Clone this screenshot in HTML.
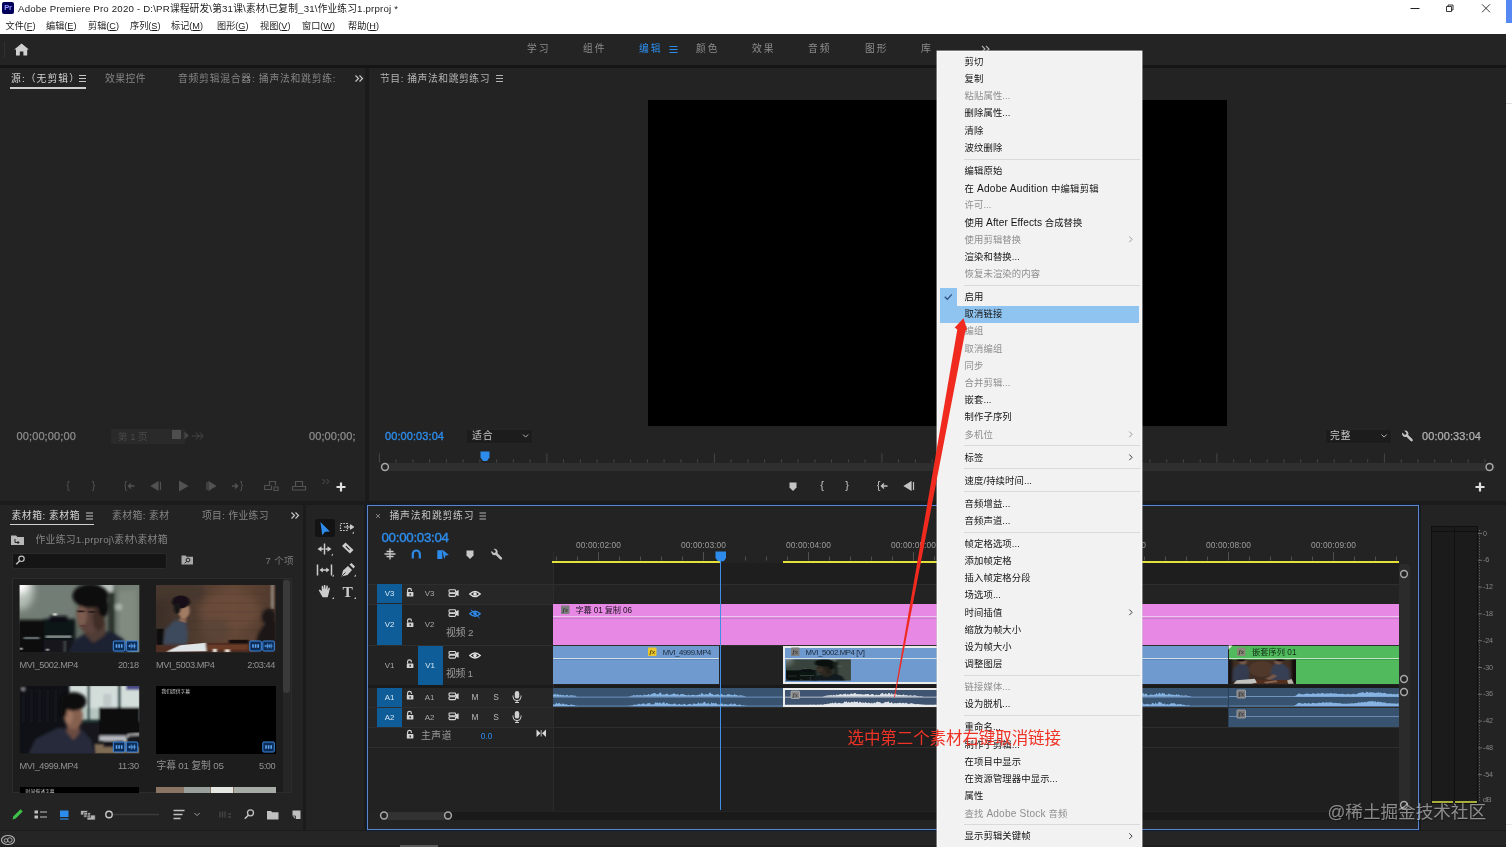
<!DOCTYPE html>
<html lang="zh-CN"><head><meta charset="utf-8"><title>Adobe Premiere Pro 2020</title>
<style>
html,body{margin:0;padding:0;}
body{width:1512px;height:847px;overflow:hidden;background:#232323;font-family:"Liberation Sans","Noto Sans CJK SC",sans-serif;position:relative;}
#app{position:absolute;left:0;top:0;width:1512px;height:847px;overflow:hidden;opacity:0.999;}
#app div{position:absolute;box-sizing:border-box;}
#app svg{position:absolute;left:0;top:0;}
u{text-decoration:underline;text-underline-offset:1px;}
</style></head><body><div id="app">
<div style="left:0px;top:34px;width:1506px;height:813px;background:#1b1b1b;"></div><div style="left:0px;top:0px;width:1512px;height:34px;background:#ffffff;"></div><div style="left:1506px;top:0px;width:6px;height:847px;background:#ffffff;"></div><div style="left:1506px;top:0px;width:6px;height:23px;background:#5688f4;"></div><div style="left:1506px;top:103px;width:6px;height:1px;background:#e4e4e4;"></div><div style="left:1506px;top:824px;width:6px;height:1px;background:#ececec;"></div><div style="left:1485.5px;top:834px;width:1px;height:12px;background:#303030;"></div><div style="left:2px;top:2px;width:12px;height:12px;background:#00005b;border-radius:2px;"></div><div style="top:3.20px;font-size:7.5px;line-height:10px;color:#9999ff;white-space:nowrap;left:-192px;width:400px;text-align:center;font-weight:bold;letter-spacing:-0.3px;">Pr</div><div style="top:2.00px;font-size:9.7px;line-height:14px;color:#1a1a1a;white-space:nowrap;left:18px;letter-spacing:0.175px;">Adobe Premiere Pro 2020 - D:\PR课程研发\第31课\素材\已复制_31\作业练习1.prproj *</div><div style="top:20.00px;font-size:9.15px;line-height:13px;color:#1a1a1a;white-space:nowrap;left:5.5px;">文件(<u>F</u>)</div><div style="top:20.00px;font-size:9.15px;line-height:13px;color:#1a1a1a;white-space:nowrap;left:46px;">编辑(<u>E</u>)</div><div style="top:20.00px;font-size:9.15px;line-height:13px;color:#1a1a1a;white-space:nowrap;left:88px;">剪辑(<u>C</u>)</div><div style="top:20.00px;font-size:9.15px;line-height:13px;color:#1a1a1a;white-space:nowrap;left:130px;">序列(<u>S</u>)</div><div style="top:20.00px;font-size:9.15px;line-height:13px;color:#1a1a1a;white-space:nowrap;left:171px;">标记(<u>M</u>)</div><div style="top:20.00px;font-size:9.15px;line-height:13px;color:#1a1a1a;white-space:nowrap;left:217px;">图形(<u>G</u>)</div><div style="top:20.00px;font-size:9.15px;line-height:13px;color:#1a1a1a;white-space:nowrap;left:260px;">视图(<u>V</u>)</div><div style="top:20.00px;font-size:9.15px;line-height:13px;color:#1a1a1a;white-space:nowrap;left:302px;">窗口(<u>W</u>)</div><div style="top:20.00px;font-size:9.15px;line-height:13px;color:#1a1a1a;white-space:nowrap;left:348px;">帮助(<u>H</u>)</div><div style="left:0px;top:34px;width:1506px;height:31px;background:#242424;"></div><div style="left:0px;top:65px;width:1506px;height:3px;background:#151515;"></div><div style="left:4px;top:42px;width:1px;height:16px;background:#303030;"></div><div style="top:42.20px;font-size:9.8px;line-height:14px;color:#8c8c8c;white-space:nowrap;left:527px;letter-spacing:1.906px;">学习</div><div style="top:42.20px;font-size:9.8px;line-height:14px;color:#8c8c8c;white-space:nowrap;left:583px;letter-spacing:1.906px;">组件</div><div style="top:42.20px;font-size:9.8px;line-height:14px;color:#2d8ceb;white-space:nowrap;left:639px;letter-spacing:1.906px;">编辑</div><div style="top:42.20px;font-size:9.8px;line-height:14px;color:#8c8c8c;white-space:nowrap;left:696px;letter-spacing:1.906px;">颜色</div><div style="top:42.20px;font-size:9.8px;line-height:14px;color:#8c8c8c;white-space:nowrap;left:752px;letter-spacing:1.906px;">效果</div><div style="top:42.20px;font-size:9.8px;line-height:14px;color:#8c8c8c;white-space:nowrap;left:808px;letter-spacing:1.906px;">音频</div><div style="top:42.20px;font-size:9.8px;line-height:14px;color:#8c8c8c;white-space:nowrap;left:865px;letter-spacing:1.906px;">图形</div><div style="top:42.20px;font-size:9.8px;line-height:14px;color:#8c8c8c;white-space:nowrap;left:921px;">库</div><div style="left:0px;top:68px;width:365px;height:432.5px;background:#232323;"></div><div style="left:368.5px;top:68px;width:1137.5px;height:432.5px;background:#232323;"></div><div style="left:0px;top:504.5px;width:303.3px;height:325.2px;background:#232323;"></div><div style="left:305.8px;top:504.5px;width:58.5px;height:325.2px;background:#232323;"></div><div style="left:367px;top:504.5px;width:1051.5px;height:325.8px;background:#232323;border:1.200px solid #5b86c9;box-shadow:0 0 0 0.900px #0e1d3a;"></div><div style="left:1421px;top:504.5px;width:85px;height:325.2px;background:#232323;"></div><div style="left:0px;top:831.3px;width:1506px;height:15.7px;background:#252525;"></div><div style="left:0px;top:844.5px;width:1506px;height:2.5px;background:#202020;"></div><div style="left:400px;top:845px;width:38px;height:2px;background:#5a5a5a;"></div><div style="top:71.60px;font-size:9.8px;line-height:14px;color:#d4d4d4;white-space:nowrap;left:11px;letter-spacing:1.081px;">源:（无剪辑）</div><div style="left:9.5px;top:87px;width:76.5px;height:1.6px;background:#cfcfcf;"></div><div style="top:71.60px;font-size:9.8px;line-height:14px;color:#858585;white-space:nowrap;left:105px;letter-spacing:0.438px;">效果控件</div><div style="top:71.60px;font-size:9.8px;line-height:14px;color:#858585;white-space:nowrap;left:178px;letter-spacing:0.761px;">音频剪辑混合器: 捅声法和跳剪练:</div><div style="top:428.80px;font-size:11px;line-height:15px;color:#8c8c8c;white-space:nowrap;left:16.5px;-webkit-text-stroke:0.250px #8c8c8c;letter-spacing:0.117px;">00;00;00;00</div><div style="left:111px;top:428.5px;width:74px;height:15px;background:#2a2a2a;border-radius:2px;"></div><div style="top:429.50px;font-size:9.5px;line-height:13px;color:#4a4a4a;white-space:nowrap;left:118px;">第 1 页</div><div style="left:172px;top:430px;width:9px;height:9px;background:#4e4e4e;"></div><div style="top:428.80px;font-size:11px;line-height:15px;color:#8c8c8c;white-space:nowrap;left:309px;-webkit-text-stroke:0.250px #8c8c8c;letter-spacing:0.078px;">00;00;00;</div><div style="top:478.00px;font-size:11px;line-height:15px;color:#525252;white-space:nowrap;left:-132px;width:400px;text-align:center;">{</div><div style="top:478.00px;font-size:11px;line-height:15px;color:#525252;white-space:nowrap;left:-106.5px;width:400px;text-align:center;">}</div><div style="top:478.00px;font-size:11px;line-height:15px;color:#525252;white-space:nowrap;left:-74.5px;width:400px;text-align:center;">{</div><div style="top:478.00px;font-size:11px;line-height:15px;color:#525252;white-space:nowrap;left:41.5px;width:400px;text-align:center;">}</div><div style="top:71.60px;font-size:9.8px;line-height:14px;color:#b4b4b4;white-space:nowrap;left:380px;letter-spacing:0.553px;">节目: 捅声法和跳剪练习</div><div style="left:648px;top:100px;width:578.5px;height:325.6px;background:#000000;"></div><div style="top:428.80px;font-size:11px;line-height:15px;color:#2d8ceb;white-space:nowrap;left:385px;-webkit-text-stroke:0.350px #2d8ceb;letter-spacing:0.087px;">00:00:03:04</div><div style="left:466px;top:428.5px;width:66.5px;height:15px;background:#1c1c1c;border-radius:2.500px;border:1px solid #252525;"></div><div style="top:429.00px;font-size:9.8px;line-height:14px;color:#c8c8c8;white-space:nowrap;left:472px;letter-spacing:1px;">适合</div><div style="left:1325px;top:428.5px;width:66.5px;height:15px;background:#1c1c1c;border-radius:2.500px;border:1px solid #252525;"></div><div style="top:429.00px;font-size:9.8px;line-height:14px;color:#c8c8c8;white-space:nowrap;left:1330px;letter-spacing:1px;">完整</div><div style="top:428.80px;font-size:11px;line-height:15px;color:#b2b2b2;white-space:nowrap;left:1422px;-webkit-text-stroke:0.250px #b2b2b2;letter-spacing:0.087px;">00:00:33:04</div><div style="left:380px;top:463px;width:1115px;height:8px;background:#2f2f2f;border-radius:4px;"></div><div style="top:478.00px;font-size:11px;line-height:15px;color:#c4c4c4;white-space:nowrap;left:622px;width:400px;text-align:center;">{</div><div style="top:478.00px;font-size:11px;line-height:15px;color:#c4c4c4;white-space:nowrap;left:647px;width:400px;text-align:center;">}</div><div style="top:478.00px;font-size:11px;line-height:15px;color:#c4c4c4;white-space:nowrap;left:678.5px;width:400px;text-align:center;">{</div><div style="top:508.70px;font-size:9.8px;line-height:14px;color:#d4d4d4;white-space:nowrap;left:11.5px;letter-spacing:0.538px;">素材箱: 素材箱</div><div style="left:9.5px;top:524px;width:84px;height:1.4px;background:#cfcfcf;"></div><div style="top:508.70px;font-size:9.8px;line-height:14px;color:#858585;white-space:nowrap;left:112px;letter-spacing:0.427px;">素材箱: 素材</div><div style="top:508.70px;font-size:9.8px;line-height:14px;color:#858585;white-space:nowrap;left:202px;letter-spacing:0.324px;">项目: 作业练习</div><div style="top:533.20px;font-size:9.8px;line-height:14px;color:#858585;white-space:nowrap;left:35.5px;letter-spacing:0.286px;">作业练习1.prproj\素材\素材箱</div><div style="left:11.6px;top:553px;width:155.5px;height:15.5px;background:#151515;border-radius:2.5px;border:1px solid #2b2b2b;"></div><div style="top:553.80px;font-size:9.6px;line-height:13px;color:#7c7c7c;white-space:nowrap;left:265.5px;letter-spacing:0.332px;">7 个项</div><div style="left:12px;top:578px;width:279.5px;height:215px;background:#1d1d1d;border:1px solid #2c2c2c;"></div><div style="left:282.5px;top:579px;width:8px;height:213px;background:#262626;"></div><div style="left:283px;top:580px;width:7px;height:113px;background:#3a3a3a;border-radius:3px;"></div><div style="left:156px;top:686px;width:119.5px;height:67.5px;background:#000000;"></div><div style="top:687.50px;font-size:4.8px;line-height:7px;color:#d0d0d0;white-space:nowrap;left:161.4px;letter-spacing:-0.039px;">我们提供字幕</div><div style="left:19.600px;top:787px;width:119.700px;height:6px;background:#000;overflow:hidden;"><div style="left:6px;top:2.200px;font-size:4.800px;line-height:6px;color:#c8c8c8;white-space:nowrap;letter-spacing:0.050px;">时间描述字幕</div></div><div style="top:658.80px;font-size:9.2px;line-height:13px;color:#929292;white-space:nowrap;left:19.6px;letter-spacing:-0.421px;">MVI_5002.MP4</div><div style="top:658.80px;font-size:9.2px;line-height:13px;color:#929292;white-space:nowrap;left:118px;letter-spacing:-0.500px;">20:18</div><div style="top:658.80px;font-size:9.2px;line-height:13px;color:#929292;white-space:nowrap;left:156px;letter-spacing:-0.403px;">MVI_5003.MP4</div><div style="top:658.80px;font-size:9.2px;line-height:13px;color:#929292;white-space:nowrap;left:247.2px;letter-spacing:-0.409px;">2:03:44</div><div style="top:759.80px;font-size:9.2px;line-height:13px;color:#929292;white-space:nowrap;left:19.6px;letter-spacing:-0.421px;">MVI_4999.MP4</div><div style="top:759.80px;font-size:9.2px;line-height:13px;color:#929292;white-space:nowrap;left:118px;letter-spacing:-0.328px;">11:30</div><div style="top:759.00px;font-size:9.8px;line-height:14px;color:#929292;white-space:nowrap;left:156.5px;letter-spacing:-0.166px;">字幕 01 复制 05</div><div style="top:759.80px;font-size:9.2px;line-height:13px;color:#929292;white-space:nowrap;left:259px;letter-spacing:-0.464px;">5:00</div><div style="left:315px;top:519px;width:19.5px;height:18px;background:#131313;border-radius:2px;"></div><div style="top:581.30px;font-size:15.5px;line-height:22px;color:#cccccc;white-space:nowrap;left:147.60000000000002px;width:400px;text-align:center;font-family:'Liberation Serif',serif;font-weight:bold;">T</div><div style="top:508.70px;font-size:9.8px;line-height:14px;color:#c6c6c6;white-space:nowrap;left:389.5px;letter-spacing:0.804px;">捅声法和跳剪练习</div><div style="top:528.20px;font-size:13.3px;line-height:19px;color:#2d8ceb;white-space:nowrap;left:381.5px;-webkit-text-stroke:0.400px #2d8ceb;letter-spacing:-0.275px;">00:00:03:04</div><div style="left:553px;top:563px;width:846px;height:21px;background:#1e1e1e;"></div><div style="left:368px;top:584px;width:185px;height:19.5px;background:#272727;"></div><div style="left:553px;top:584px;width:846px;height:19.5px;background:#232323;"></div><div style="left:368px;top:604px;width:1041px;height:40.5px;background:#222222;"></div><div style="left:368px;top:645.5px;width:1041px;height:39px;background:#222222;"></div><div style="left:368px;top:684.5px;width:1041px;height:3.5px;background:#1a1a1a;"></div><div style="left:368px;top:688px;width:185px;height:19px;background:#262626;"></div><div style="left:553px;top:688px;width:846px;height:19px;background:#1f1f1f;"></div><div style="left:368px;top:708px;width:185px;height:19px;background:#262626;"></div><div style="left:553px;top:708px;width:846px;height:19px;background:#1f1f1f;"></div><div style="left:368px;top:727.5px;width:185px;height:19px;background:#232323;"></div><div style="left:553px;top:727.5px;width:846px;height:19px;background:#1f1f1f;"></div><div style="left:368px;top:747px;width:185px;height:64px;background:#222222;"></div><div style="left:553px;top:747px;width:846px;height:64px;background:#1f1f1f;"></div><div style="left:368px;top:583.5px;width:1031px;height:1px;background:#2e2e2e;"></div><div style="left:368px;top:603.5px;width:1031px;height:1px;background:#2e2e2e;"></div><div style="left:368px;top:644.8px;width:1031px;height:1px;background:#2e2e2e;"></div><div style="left:368px;top:707.3px;width:1031px;height:1px;background:#2e2e2e;"></div><div style="left:368px;top:727px;width:1031px;height:1px;background:#2e2e2e;"></div><div style="left:368px;top:746.5px;width:1031px;height:1px;background:#2e2e2e;"></div><div style="left:552.5px;top:551px;width:1px;height:260px;background:#2c2c2c;"></div><div style="top:539.00px;font-size:8.4px;line-height:12px;color:#9c9c9c;white-space:nowrap;left:398.5px;width:400px;text-align:center;letter-spacing:0.050px;">00:00:02:00</div><div style="top:539.00px;font-size:8.4px;line-height:12px;color:#9c9c9c;white-space:nowrap;left:503.5px;width:400px;text-align:center;letter-spacing:0.050px;">00:00:03:00</div><div style="top:539.00px;font-size:8.4px;line-height:12px;color:#9c9c9c;white-space:nowrap;left:608.5px;width:400px;text-align:center;letter-spacing:0.050px;">00:00:04:00</div><div style="top:539.00px;font-size:8.4px;line-height:12px;color:#9c9c9c;white-space:nowrap;left:713.5px;width:400px;text-align:center;letter-spacing:0.050px;">00:00:05:00</div><div style="top:539.00px;font-size:8.4px;line-height:12px;color:#9c9c9c;white-space:nowrap;left:818.5px;width:400px;text-align:center;letter-spacing:0.050px;">00:00:06:00</div><div style="top:539.00px;font-size:8.4px;line-height:12px;color:#9c9c9c;white-space:nowrap;left:923.5px;width:400px;text-align:center;letter-spacing:0.050px;">00:00:07:00</div><div style="top:539.00px;font-size:8.4px;line-height:12px;color:#9c9c9c;white-space:nowrap;left:1028.5px;width:400px;text-align:center;letter-spacing:0.050px;">00:00:08:00</div><div style="top:539.00px;font-size:8.4px;line-height:12px;color:#9c9c9c;white-space:nowrap;left:1133.5px;width:400px;text-align:center;letter-spacing:0.050px;">00:00:09:00</div><div style="left:552px;top:560.5px;width:168px;height:2.2px;background:#e6e03a;"></div><div style="left:783px;top:560.5px;width:616px;height:2.2px;background:#e6e03a;"></div><div style="left:553px;top:604px;width:846px;height:40.5px;background:#e688e4;"></div><div style="left:553px;top:616.2px;width:846px;height:1.3px;background:#ecc6ec;"></div><div style="left:553px;top:617.5px;width:846px;height:0.7px;background:#c97cc9;"></div><div style="left:553px;top:645.5px;width:166.2px;height:38.5px;background:#6e9ad0;"></div><div style="left:553px;top:657.7px;width:166.2px;height:1.2px;background:#d3deeb;"></div><div style="left:553px;top:658.9px;width:166.2px;height:0.7px;background:#5f88ba;"></div><div style="left:783px;top:645.6px;width:267px;height:38.3px;background:#6e9ad0;border:2.600px solid #ececec;"></div><div style="left:785px;top:657.7px;width:263px;height:1.2px;background:#d3deeb;"></div><div style="left:1050px;top:645.5px;width:178px;height:38.5px;background:#6e9ad0;"></div><div style="left:1050px;top:657.7px;width:178px;height:1.2px;background:#d3deeb;"></div><div style="left:1050px;top:658.9px;width:178px;height:0.7px;background:#5f88ba;"></div><div style="left:1228.5px;top:645.5px;width:170.5px;height:38.5px;background:#50ba5c;"></div><div style="left:1228.5px;top:657.7px;width:170.5px;height:1.2px;background:#c2e6c4;"></div><div style="left:1228.5px;top:658.9px;width:170.5px;height:0.7px;background:#3f9f4b;"></div><div style="top:604.50px;font-size:8.2px;line-height:11px;color:#1c1420;white-space:nowrap;left:575.5px;letter-spacing:-0.130px;">字幕 01 复制 06</div><div style="top:646.50px;font-size:7.7px;line-height:11px;color:#1a2433;white-space:nowrap;left:662.7px;letter-spacing:-0.400px;">MVI_4999.MP4</div><div style="top:646.50px;font-size:7.7px;line-height:11px;color:#1a2433;white-space:nowrap;left:805.5px;letter-spacing:-0.335px;">MVI_5002.MP4 [V]</div><div style="top:646.50px;font-size:8.2px;line-height:11px;color:#0f2a14;white-space:nowrap;left:1252px;letter-spacing:0.060px;">嵌套序列 01</div><div style="left:553px;top:688px;width:230px;height:19px;background:#38536f;"></div><div style="left:783px;top:687.7px;width:267px;height:19.2px;background:#3e5470;border:2.400px solid #ececec;"></div><div style="left:1050px;top:688px;width:178.5px;height:19px;background:#38536f;"></div><div style="left:1228.5px;top:688px;width:170.5px;height:19px;background:#38536f;"></div><div style="left:1228.5px;top:708px;width:170.5px;height:19px;background:#38536f;"></div><div style="left:553px;top:696.8px;width:230px;height:1px;background:#5878a0;"></div><div style="left:785px;top:696.8px;width:263px;height:1px;background:#8a98a8;"></div><div style="left:1050px;top:696.8px;width:178px;height:1px;background:#5878a0;"></div><div style="left:1228.5px;top:696.4px;width:170.5px;height:1px;background:#6a8ab0;"></div><div style="left:1228.5px;top:716.1px;width:170.5px;height:1px;background:#6a8ab0;"></div><div style="left:1228px;top:688px;width:1px;height:39px;background:#2a3f58;"></div><div style="left:719.5px;top:552px;width:1.2px;height:258px;background:#3f8ee6;"></div><div style="left:1399px;top:564px;width:10.5px;height:247px;background:#2b2b2b;border-radius:4px;"></div><div style="left:380px;top:811.5px;width:1020px;height:8px;background:#1a1a1a;border-radius:4px;"></div><div style="left:381px;top:811.5px;width:70px;height:8px;background:#323232;border-radius:4px;"></div><div style="left:377px;top:584px;width:25px;height:19px;background:#0e5d99;"></div><div style="left:377px;top:604px;width:25px;height:40.5px;background:#0e5d99;"></div><div style="left:417.9px;top:645.5px;width:25px;height:39px;background:#0e5d99;"></div><div style="left:377px;top:688px;width:25px;height:19px;background:#0e5d99;"></div><div style="left:377px;top:708px;width:25px;height:19px;background:#0e5d99;"></div><div style="top:588.30px;font-size:7.9px;line-height:11px;color:#d8e6f2;white-space:nowrap;left:189.5px;width:400px;text-align:center;letter-spacing:-0.200px;">V3</div><div style="top:588.30px;font-size:7.9px;line-height:11px;color:#a8a8a8;white-space:nowrap;left:229.5px;width:400px;text-align:center;letter-spacing:-0.200px;">V3</div><div style="top:619.00px;font-size:7.9px;line-height:11px;color:#d8e6f2;white-space:nowrap;left:189.5px;width:400px;text-align:center;letter-spacing:-0.200px;">V2</div><div style="top:619.00px;font-size:7.9px;line-height:11px;color:#a8a8a8;white-space:nowrap;left:229.5px;width:400px;text-align:center;letter-spacing:-0.200px;">V2</div><div style="top:659.50px;font-size:7.9px;line-height:11px;color:#a8a8a8;white-space:nowrap;left:189.5px;width:400px;text-align:center;letter-spacing:-0.200px;">V1</div><div style="top:659.50px;font-size:7.9px;line-height:11px;color:#d8e6f2;white-space:nowrap;left:230px;width:400px;text-align:center;letter-spacing:-0.200px;">V1</div><div style="top:692.00px;font-size:7.9px;line-height:11px;color:#d8e6f2;white-space:nowrap;left:189.5px;width:400px;text-align:center;letter-spacing:-0.200px;">A1</div><div style="top:692.00px;font-size:7.9px;line-height:11px;color:#a8a8a8;white-space:nowrap;left:229.5px;width:400px;text-align:center;letter-spacing:-0.200px;">A1</div><div style="top:712.00px;font-size:7.9px;line-height:11px;color:#d8e6f2;white-space:nowrap;left:189.5px;width:400px;text-align:center;letter-spacing:-0.200px;">A2</div><div style="top:712.00px;font-size:7.9px;line-height:11px;color:#a8a8a8;white-space:nowrap;left:229.5px;width:400px;text-align:center;letter-spacing:-0.200px;">A2</div><div style="top:625.50px;font-size:9.8px;line-height:14px;color:#9c9c9c;white-space:nowrap;left:446px;letter-spacing:-0.089px;">视频 2</div><div style="top:666.50px;font-size:9.8px;line-height:14px;color:#9c9c9c;white-space:nowrap;left:446px;letter-spacing:-0.255px;">视频 1</div><div style="top:691.00px;font-size:8.4px;line-height:12px;color:#b8b8b8;white-space:nowrap;left:275px;width:400px;text-align:center;">M</div><div style="top:691.00px;font-size:8.4px;line-height:12px;color:#b8b8b8;white-space:nowrap;left:296px;width:400px;text-align:center;">S</div><div style="top:711.00px;font-size:8.4px;line-height:12px;color:#b8b8b8;white-space:nowrap;left:275px;width:400px;text-align:center;">M</div><div style="top:711.00px;font-size:8.4px;line-height:12px;color:#b8b8b8;white-space:nowrap;left:296px;width:400px;text-align:center;">S</div><div style="top:728.50px;font-size:9.8px;line-height:14px;color:#9c9c9c;white-space:nowrap;left:421px;letter-spacing:0.555px;">主声道</div><div style="top:730.00px;font-size:8.4px;line-height:12px;color:#2d8ceb;white-space:nowrap;left:286.5px;width:400px;text-align:center;">0.0</div><div style="left:1430.5px;top:525.5px;width:47.5px;height:278px;background:#1b1b1b;border:1px solid #101010;"></div><div style="left:1453.5px;top:526px;width:1px;height:277px;background:#101010;"></div><div style="left:1431px;top:531px;width:46.5px;height:1px;background:#101010;"></div><div style="left:1431.5px;top:801px;width:21.5px;height:1.6px;background:#a8ad3c;"></div><div style="left:1455px;top:801px;width:21.5px;height:1.6px;background:#a8ad3c;"></div><div style="top:528.50px;font-size:7.2px;line-height:10px;color:#858585;white-space:nowrap;left:1483px;letter-spacing:-0.200px;">0</div><div style="top:555.30px;font-size:7.2px;line-height:10px;color:#858585;white-space:nowrap;left:1483px;letter-spacing:-0.200px;">-6</div><div style="top:582.10px;font-size:7.2px;line-height:10px;color:#858585;white-space:nowrap;left:1483px;letter-spacing:-0.200px;">-12</div><div style="top:608.90px;font-size:7.2px;line-height:10px;color:#858585;white-space:nowrap;left:1483px;letter-spacing:-0.200px;">-18</div><div style="top:635.70px;font-size:7.2px;line-height:10px;color:#858585;white-space:nowrap;left:1483px;letter-spacing:-0.200px;">-24</div><div style="top:662.50px;font-size:7.2px;line-height:10px;color:#858585;white-space:nowrap;left:1483px;letter-spacing:-0.200px;">-30</div><div style="top:689.30px;font-size:7.2px;line-height:10px;color:#858585;white-space:nowrap;left:1483px;letter-spacing:-0.200px;">-36</div><div style="top:716.10px;font-size:7.2px;line-height:10px;color:#858585;white-space:nowrap;left:1483px;letter-spacing:-0.200px;">-42</div><div style="top:742.90px;font-size:7.2px;line-height:10px;color:#858585;white-space:nowrap;left:1483px;letter-spacing:-0.200px;">-48</div><div style="top:769.70px;font-size:7.2px;line-height:10px;color:#858585;white-space:nowrap;left:1483px;letter-spacing:-0.200px;">-54</div><div style="top:795.00px;font-size:7.2px;line-height:10px;color:#858585;white-space:nowrap;left:1483px;letter-spacing:-0.200px;">dB</div>
<svg width="1512" height="847" viewBox="0 0 1512 847"><path d="M1410.5 8.5h9" stroke="#222" stroke-width="1" fill="none"/><path d="M1446.5 6.5h5v5h-5zM1448 6.5v-1.5h5v5h-1.5" stroke="#222" stroke-width="0.9" fill="none"/><path d="M1482 4.3l8 8M1490 4.3l-8 8" stroke="#222" stroke-width="0.9" fill="none"/><path d="M14.3 49.6 L21.6 43.6 L28.9 49.6 L27.2 49.6 L27.2 55.6 L23.4 55.6 L23.4 51.6 L19.8 51.6 L19.8 55.6 L16 55.6 L16 49.6 Z" fill="#d0d0d0"/><path d="M669.5 46.5h8M669.5 49.5h8M669.5 52.5h8" stroke="#2d8ceb" stroke-width="1" fill="none"/><path d="M982 46l3 3-3 3M986 46l3 3-3 3" stroke="#b0b0b0" stroke-width="1.1" fill="none"/><path d="M79 75.5h7M79 78.5h7M79 81.5h7" stroke="#c8c8c8" stroke-width="1" fill="none"/><path d="M355.5 75.5l3 3-3 3M359.5 75.5l3 3-3 3" stroke="#c8c8c8" stroke-width="1.2" fill="none"/><path d="M184.5 431.5l4.5 4-4.5 4z" fill="#444"/><path d="M192 436h10M196 432.5l3 3.5-3 3.5M200 432.5l3 3.5-3 3.5" stroke="#444" stroke-width="1" fill="none"/><path d="M134.5 486h-6M131 483.5l-2.6 2.5 2.6 2.5" stroke="#525252" stroke-width="1.3" fill="none"/><path d="M158 482l-6.5 4 6.5 4zM160.5 482v8" fill="#525252" stroke="#525252" stroke-width="1.2"/><path d="M179 480.5l9.5 5.5-9.5 5.5z" fill="#525252"/><path d="M209 482l6.500 4-6.5 4zM207 482v8" fill="#525252" stroke="#525252" stroke-width="1.2"/><path d="M232 486h6M235 483.500l2.600 2.500-2.600 2.500" stroke="#525252" stroke-width="1.300" fill="none"/><path d="M264.5 485.500h5v-4h6v4M264.500 485.500v4h7v-4M274 487h4v3.500h-4z" stroke="#525252" stroke-width="1.200" fill="none"/><path d="M292.500 490v-3.500h13v3.500zM295.500 486.500v-5h7v5" stroke="#525252" stroke-width="1.200" fill="none"/><path d="M322.500 479l2.500 2.500-2.500 2.500M326.500 479l2.500 2.500-2.500 2.500" stroke="#525252" stroke-width="1" fill="none"/><path d="M341 482.500v9M336.500 487h9" stroke="#e0e0e0" stroke-width="2.200" fill="none"/><path d="M496 75.5h7M496 78.5h7M496 81.5h7" stroke="#b4b4b4" stroke-width="1" fill="none"/><path d="M523 434.500l2.600 2.600 2.600-2.600" stroke="#b0b0b0" stroke-width="1" fill="none"/><path d="M1381.500 434.500l2.600 2.600 2.600-2.600" stroke="#b0b0b0" stroke-width="1" fill="none"/><path d="M1404.2 430.6 l2.300 2.300 -0.400 1.500 -1.600 0.400 -2.300 -2.300 a3.300 3.300 0 0 0 4.200 4.300 l4.300 4.300 a1.250 1.250 0 0 0 1.800 -1.800 l-4.300 -4.300 a3.300 3.300 0 0 0 -4 -4.400z" fill="#c4c4c4"/><path d="M379.4 462.5v-9M396.1 462.5v-3.2M412.9 462.5v-3.2M429.6 462.5v-3.2M446.4 462.5v-3.2M463.1 462.5v-3.2M479.9 462.5v-3.2M496.6 462.5v-3.2M513.4 462.5v-3.2M530.1 462.5v-3.2M546.9 462.5v-9M563.6 462.5v-3.2M580.4 462.5v-3.2M597.1 462.5v-3.2M613.9 462.5v-3.2M630.6 462.5v-3.2M647.4 462.5v-3.2M664.1 462.5v-3.2M680.9 462.5v-3.2M697.6 462.5v-3.2M714.4 462.5v-9M731.1 462.5v-3.2M747.9 462.5v-3.2M764.6 462.5v-3.2M781.4 462.5v-3.2M798.1 462.5v-3.2M814.9 462.5v-3.2M831.6 462.5v-3.2M848.4 462.5v-3.2M865.1 462.5v-3.2M881.9 462.5v-9M898.6 462.5v-3.2M915.4 462.5v-3.2M932.1 462.5v-3.2M948.9 462.5v-3.2M965.6 462.5v-3.2M982.4 462.5v-3.2M999.1 462.5v-3.2M1015.9 462.5v-3.2M1032.7 462.5v-3.2M1049.4 462.5v-9M1066.2 462.5v-3.2M1082.9 462.5v-3.2M1099.7 462.5v-3.2M1116.4 462.5v-3.2M1133.2 462.5v-3.2M1149.9 462.5v-3.2M1166.7 462.5v-3.2M1183.4 462.5v-3.2M1200.2 462.5v-3.2M1216.9 462.5v-9M1233.7 462.5v-3.2M1250.4 462.5v-3.2M1267.2 462.5v-3.2M1283.9 462.5v-3.2M1300.7 462.5v-3.2M1317.4 462.5v-3.2M1334.2 462.5v-3.2M1350.9 462.5v-3.2M1367.7 462.5v-3.2M1384.4 462.5v-9M1401.2 462.5v-3.2M1417.9 462.5v-3.2M1434.7 462.5v-3.2M1451.4 462.5v-3.2M1468.2 462.5v-3.2M1484.9 462.5v-3.2" stroke="#474747" stroke-width="1" fill="none"/><circle cx="385" cy="467" r="3.4" fill="#262626" stroke="#a8a8a8" stroke-width="1.5"/><circle cx="1489.500" cy="467" r="3.400" fill="#262626" stroke="#a8a8a8" stroke-width="1.500"/><path d="M480.500 451.500h9v6l-2.500 3.500h-4l-2.500-3.500z" fill="#2d8ceb"/><path d="M789.500 482.500h7v5l-3.500 3.500-3.500-3.500z" fill="#c4c4c4"/><path d="M887.500 486h-6M884 483.500l-2.600 2.500 2.600 2.500" stroke="#c4c4c4" stroke-width="1.300" fill="none"/><path d="M911 482l-6.500 4 6.500 4zM913.500 482v8" fill="#c4c4c4" stroke="#c4c4c4" stroke-width="1.200"/><path d="M1480 482.500v9M1475.500 487h9" stroke="#e0e0e0" stroke-width="2.200" fill="none"/><defs><filter id="bl" x="-5%" y="-5%" width="110%" height="110%"><feGaussianBlur stdDeviation="1.600"/></filter><filter id="bl2" x="-5%" y="-5%" width="110%" height="110%"><feGaussianBlur stdDeviation="0.800"/></filter><filter id="bl3" x="-5%" y="-5%" width="110%" height="110%"><feGaussianBlur stdDeviation="3.500"/></filter><radialGradient id="glow" cx="0.05" cy="0.05" r="0.550"><stop offset="0" stop-color="#ffffff"/><stop offset="0.350" stop-color="#d5ddd6" stop-opacity="0.900"/><stop offset="1" stop-color="#7a857c" stop-opacity="0"/></radialGradient><linearGradient id="wood" x1="0" x2="1"><stop offset="0" stop-color="#3b2f28"/><stop offset="0.300" stop-color="#4e3a2f"/><stop offset="0.650" stop-color="#634736"/><stop offset="1" stop-color="#503a2e"/></linearGradient></defs><path d="M86 513h7M86 516h7M86 519h7" stroke="#c8c8c8" stroke-width="1" fill="none"/><path d="M291.500 512.500l3 3-3 3M295.500 512.500l3 3-3 3" stroke="#c8c8c8" stroke-width="1.200" fill="none"/><path d="M11 535.500h5l1.500 1.500h6.500v8h-13z" fill="#b8b8b8"/><path d="M15 539v3.500h4M17.500 541l1.500 1.500-1.500 1.500" stroke="#232323" stroke-width="1" fill="none"/><circle cx="21.5" cy="558.800" r="2.700" fill="none" stroke="#c0c0c0" stroke-width="1.200"/><path d="M19.600 560.900l-3.400 3.400" stroke="#c0c0c0" stroke-width="1.400"/><path d="M181.500 555.500h4l1.200 1.300h6.300v7.700h-11.500z" fill="#a8a8a8"/><circle cx="188" cy="560" r="1.900" fill="none" stroke="#232323" stroke-width="1"/><path d="M186.700 561.400l-2 2" stroke="#232323" stroke-width="1"/><defs><clipPath id="tc1"><rect x="19.6" y="585" width="119.7" height="67.3"/></clipPath></defs><g clip-path="url(#tc1)"><g transform="translate(19.6 585) scale(0.9975 0.9970)"><rect width="120" height="67.500" fill="#606c63"/><g filter="url(#bl3)"><rect x="-6" y="-6" width="64" height="44" fill="#727d74"/><ellipse cx="1" cy="5" rx="13" ry="19" fill="#b4bdb5"/><ellipse cx="0" cy="0" rx="9" ry="9" fill="#ffffff"/><rect x="96" y="-6" width="30" height="80" fill="#768076"/></g><g filter="url(#bl)"><rect x="100" y="6" width="17" height="58" fill="#818b80"/><rect x="89" y="4" width="6" height="50" fill="#2b302c"/><rect x="80" y="-3" width="14" height="10" fill="#b9c0ba"/><ellipse cx="99.500" cy="22" rx="3.500" ry="3.500" fill="#a9b3a9"/><rect x="-2" y="35" width="28" height="36" fill="#0b0c0e"/><rect x="24" y="34" width="32" height="22" fill="#101214"/><rect x="30" y="31" width="18" height="6" fill="#0f1113"/><rect x="24" y="55" width="34" height="16" fill="#17191c"/></g><g filter="url(#bl2)"><rect x="26" y="50.500" width="26" height="2.600" fill="#7c8583"/><rect x="4" y="52" width="16" height="2.400" fill="#5d6668"/><ellipse cx="35.500" cy="29.500" rx="2" ry="1.300" fill="#d8dacd"/><rect x="44" y="56" width="2.500" height="11" fill="#43494c"/><circle cx="1.500" cy="64" r="1.300" fill="#d0d0d0"/><circle cx="28" cy="65" r="1.300" fill="#c8c8c8"/></g><g filter="url(#bl)"><path d="M48 70 L55 55 L70 46 L92 47 L104 54 L110 70 Z" fill="#1f2432"/><path d="M64 48 L66 36 L86 36 L86 50 L74 58 Z" fill="#513c34"/><ellipse cx="70" cy="31" rx="13" ry="17" fill="#5c423a"/><ellipse cx="62.500" cy="31" rx="5" ry="10" fill="#7c5c4f"/><ellipse cx="79" cy="33" rx="6" ry="13" fill="#3f2d28"/><ellipse cx="71" cy="11" rx="18" ry="12" fill="#0d0d0f"/><ellipse cx="84" cy="22" rx="5.500" ry="10" fill="#0f0e10"/></g><g filter="url(#bl2)"><path d="M58 26.500h7M69 27h7" stroke="#2a1d1a" stroke-width="1.600" fill="none"/><path d="M61 41h5" stroke="#5a3530" stroke-width="1.400" fill="none"/></g></g></g><defs><clipPath id="tc2"><rect x="156" y="585" width="119.7" height="67.3"/></clipPath></defs><g clip-path="url(#tc2)"><g transform="translate(156 585) scale(0.9975 0.9970)"><rect width="120" height="67.500" fill="url(#wood)"/><g filter="url(#bl3)"><ellipse cx="74" cy="26" rx="30" ry="20" fill="#6d4e3c" opacity="0.800"/><rect x="-5" y="-5" width="52" height="20" fill="#46372e"/><ellipse cx="60" cy="44" rx="14" ry="10" fill="#5a4437"/></g><g filter="url(#bl2)"><path d="M0 9h120M0 18h120M0 27h120M0 36h120M0 45h120" stroke="#3e2f27" stroke-width="0.600" opacity="0.450" fill="none"/><rect x="115.500" y="-1" width="2.200" height="25" fill="#a39a91"/><rect x="-1" y="58" width="122" height="10" fill="#4f2d20"/><rect x="52" y="60" width="40" height="5" fill="#6b3a25"/><rect x="0" y="44" width="8" height="16" fill="#0e0d11"/><rect x="73" y="55" width="20" height="3.500" fill="#13100f"/></g><g filter="url(#bl)"><path d="M98 70 L102 50 L108 40 L121 36 L121 70 Z" fill="#1b1513"/><ellipse cx="113" cy="32" rx="7" ry="8.500" fill="#1a1413"/><path d="M7 60 L9 45 L19 35 L30 36 L32 48 L31 60 Z" fill="#3d485c"/></g><g filter="url(#bl2)"><path d="M23 36 L25 30 L31 30 L30 38 Z" fill="#8b6753"/><ellipse cx="28" cy="25.500" rx="5.800" ry="8" fill="#a17b64"/><ellipse cx="25" cy="17" rx="9" ry="6.500" fill="#121115"/><ellipse cx="21.500" cy="23" rx="3.500" ry="6" fill="#141317"/><path d="M10 67 L24 60.500 L50 58 L51 66.500 Z" fill="#dfe4e6"/><rect x="57" y="64" width="4" height="3.500" fill="#e8e2dc"/><rect x="69" y="64.500" width="5" height="3" fill="#e8dcd0"/></g></g></g><defs><clipPath id="tc3"><rect x="19.6" y="686" width="119.7" height="67.6"/></clipPath></defs><g clip-path="url(#tc3)"><g transform="translate(19.6 686) scale(0.9975 1.0015)"><rect width="120" height="67.500" fill="#101116"/><g filter="url(#bl2)"><rect x="50" y="-1" width="71" height="36" fill="#d3dedb"/><rect x="50" y="22" width="71" height="14" fill="#b5c6c0"/><rect x="68" y="-1" width="2.600" height="37" fill="#2c4947"/><rect x="98.500" y="-1" width="3" height="30" fill="#2c4947"/><rect x="50" y="33" width="40" height="3" fill="#2a403e"/><rect x="84" y="8" width="8" height="12" fill="#c0c8c8"/><rect x="107" y="-1" width="14" height="5" fill="#4d4c8c"/><path d="M4 3v34M12 3v34M20 3v34M28 3v34M36 3v34" stroke="#1b1c22" stroke-width="1.500" fill="none"/><rect x="1" y="1" width="5" height="4" fill="#77777b"/><rect x="75" y="58" width="46" height="10" fill="#806c55"/><rect x="79.500" y="21.500" width="41" height="28" fill="#0b0c0f"/><rect x="77" y="49.500" width="30" height="5.500" fill="#b4b8bd"/><rect x="84" y="55" width="12" height="6" fill="#15161a"/><path d="M105 57 L109 49 L121 48.500" stroke="#ecebe8" stroke-width="1.400" fill="none"/><rect x="107" y="51" width="14" height="10" fill="#16161b"/><rect x="62" y="36" width="18" height="20" fill="#17191e"/></g><g filter="url(#bl)"><path d="M8 70 L16 53 L38 42 L62 43 L72 54 L76 70 Z" fill="#262b3b"/><path d="M47 46 L48 38 L60 38 L60 47 L54 54 Z" fill="#6a4c40"/><ellipse cx="54" cy="30.500" rx="9.500" ry="12.500" fill="#86604f"/><ellipse cx="49.500" cy="30" rx="4" ry="8" fill="#9c735f"/><ellipse cx="54" cy="15.500" rx="13" ry="9.500" fill="#0b0b0f"/><ellipse cx="44" cy="24" rx="3.500" ry="8" fill="#0d0d11"/></g></g></g><g><rect x="156" y="787" width="119.500" height="6" fill="#8a7564"/><rect x="184" y="787" width="26" height="6" fill="#9aa09c"/><rect x="211" y="787" width="22" height="6" fill="#e4e6e2"/><rect x="234" y="787" width="42" height="6" fill="#a8aca6"/></g><rect x="113.3" y="641" width="11.500" height="10" rx="1" fill="#0d2c55" stroke="#3d8be6" stroke-width="1"/><path d="M116.5 644.2v3.600M119.1 644.2v3.600M121.7 644.2v3.600" stroke="#5fa6f2" stroke-width="1.600"/><rect x="126.3" y="641" width="11.500" height="10" rx="1" fill="#0d2c55" stroke="#3d8be6" stroke-width="1"/><path d="M127.8 646h8.500" stroke="#5fa6f2" stroke-width="0.700"/><path d="M129.5 644.8v2.400M131.2 643.5v5M132.9 644.4v3.200M134.6 643.5v5" stroke="#5fa6f2" stroke-width="0.900"/><rect x="249.8" y="641" width="11.500" height="10" rx="1" fill="#0d2c55" stroke="#3d8be6" stroke-width="1"/><path d="M253.0 644.2v3.600M255.60000000000002 644.2v3.600M258.2 644.2v3.600" stroke="#5fa6f2" stroke-width="1.600"/><rect x="262.8" y="641" width="11.500" height="10" rx="1" fill="#0d2c55" stroke="#3d8be6" stroke-width="1"/><path d="M264.3 646h8.500" stroke="#5fa6f2" stroke-width="0.700"/><path d="M266.0 644.8v2.400M267.7 643.5v5M269.40000000000003 644.4v3.200M271.1 643.5v5" stroke="#5fa6f2" stroke-width="0.900"/><rect x="113.3" y="742" width="11.500" height="10" rx="1" fill="#0d2c55" stroke="#3d8be6" stroke-width="1"/><path d="M116.5 745.2v3.600M119.1 745.2v3.600M121.7 745.2v3.600" stroke="#5fa6f2" stroke-width="1.600"/><rect x="126.3" y="742" width="11.500" height="10" rx="1" fill="#0d2c55" stroke="#3d8be6" stroke-width="1"/><path d="M127.8 747h8.500" stroke="#5fa6f2" stroke-width="0.700"/><path d="M129.5 745.8v2.400M131.2 744.5v5M132.9 745.4v3.200M134.6 744.5v5" stroke="#5fa6f2" stroke-width="0.900"/><rect x="262.8" y="742" width="11.500" height="10" rx="1" fill="#0d2c55" stroke="#3d8be6" stroke-width="1"/><path d="M266.0 745.2v3.600M268.6 745.2v3.600M271.2 745.2v3.600" stroke="#5fa6f2" stroke-width="1.600"/><path d="M12.500 819.500l1-3.200 7-7 2.200 2.200-7 7z" fill="#3fc24a"/><path d="M34.500 810.500h3.500v3h-3.500zM34.500 815.500h3.500v3h-3.500z" fill="#c0c0c0"/><path d="M40 812h7M40 817h7" stroke="#c0c0c0" stroke-width="1.200"/><rect x="60" y="810.500" width="8.500" height="6.500" fill="#2d8ceb"/><path d="M60 819h8.500" stroke="#2d8ceb" stroke-width="1.200"/><path d="M80.600 810.500h7v4.500h-7zM83.600 812.700h7v4.500h-7zM87 815h8.300v5h-8.300z" fill="#b4b4b4" stroke="#232323" stroke-width="0.700"/><path d="M113 814.500h46" stroke="#3c3c3c" stroke-width="1.600"/><circle cx="109" cy="814.500" r="3.200" fill="#232323" stroke="#c8c8c8" stroke-width="1.400"/><path d="M173.500 810.500h11M173.500 814.500h9M173.500 818.500h7" stroke="#c0c0c0" stroke-width="1.500"/><path d="M194.500 813l2.600 2.600 2.600-2.600" stroke="#a0a0a0" stroke-width="1" fill="none"/><path d="M220 811.500v6M222.500 811.500v6M225 811.500v6M228 814h3M228 817h3" stroke="#444" stroke-width="1.400"/><circle cx="250.500" cy="812.800" r="3" fill="none" stroke="#c0c0c0" stroke-width="1.300"/><path d="M248.400 815.100l-3.600 3.600" stroke="#c0c0c0" stroke-width="1.500"/><path d="M267 811h4l1.200 1.300h6.300v7.200h-11.500z" fill="#c0c0c0"/><path d="M292.500 810.500h8v8.500h-5l-3-3z" fill="#c0c0c0"/><path d="M292.500 816h3v3" fill="none" stroke="#232323" stroke-width="0.800"/><ellipse cx="8" cy="840" rx="6.500" ry="4.500" fill="none" stroke="#b0b0b0" stroke-width="1.200"/><circle cx="6" cy="840.500" r="1.800" fill="none" stroke="#b0b0b0" stroke-width="0.900"/><circle cx="9.800" cy="840" r="2.300" fill="none" stroke="#b0b0b0" stroke-width="0.900"/><path d="M320.400 522 L329.900 531.600 L325 531.700 L322.300 535.200 Z" fill="#2d8ceb"/><rect x="340.500" y="523.500" width="7" height="7" fill="none" stroke="#cccccc" stroke-width="1.200" stroke-dasharray="1.600 1.200"/><path d="M344 527h6.500v-2.300l3.300 2.300-3.300 2.300v-2.300" fill="#cccccc" stroke="#cccccc" stroke-width="1"/><path d="M354 531.500v2h-2z" fill="#cccccc"/><path d="M324.500 543.500v11" stroke="#cccccc" stroke-width="1.500"/><path d="M317.500 549l4-2.800v2h2v1.600h-2v2zM331.500 549l-4-2.800v2h-2v1.600h2v2z" fill="#cccccc"/><path d="M333 553.500v2h-2z" fill="#cccccc"/><path d="M345.500 542.500l8 7.500-3.500 3.500-8-7.500z" fill="#cccccc"/><path d="M345.800 546.200l3.800 3.600" stroke="#232323" stroke-width="1.100"/><path d="M317.500 564.500v11M331.500 564.500v11" stroke="#cccccc" stroke-width="1.500"/><path d="M319.500 570l3.300-2.500v1.700h3.400v-1.700l3.300 2.500-3.300 2.500v-1.700h-3.400v1.700z" fill="#cccccc"/><path d="M334 574.500v2h-2z" fill="#cccccc"/><path d="M341.500 576.500l1.500-6 5-4.500 4 4-4.500 5zM349.500 564.500l2-1.500 3.500 3.500-1.500 2z" fill="#cccccc"/><path d="M342 576l3.500-3.500" stroke="#232323" stroke-width="0.900"/><path d="M356 574.500v2h-2z" fill="#cccccc"/><path transform="translate(0 2)" d="M320.500 591.500l-1.800-3.200 1.200-0.800 1.800 1.800v-5.300l1.300-0.200 0.600 3.700 0.300-4.600 1.400 0 0.400 4.600 0.900-4 1.300 0.300-0.300 4.300 1.300-2.600 1.100 0.600-1.300 5.400-1 3.800h-5z" fill="#cccccc"/><path d="M334 597v2h-2z" fill="#cccccc"/><path d="M356 597v2h-2z" fill="#cccccc"/><path d="M376 514l4 4M380 514l-4 4" stroke="#8a8a8a" stroke-width="0.900" fill="none"/><path d="M479.500 513h6.500M479.500 516h6.500M479.500 519h6.500" stroke="#b4b4b4" stroke-width="1" fill="none"/><path d="M384.500 554h11M390 548.500v11M386.500 551.500h7M386.500 556.500h7" stroke="#c8c8c8" stroke-width="1.300" fill="none"/><path d="M412.800 558.500v-4.500a3.500 3.500 0 0 1 7 0v4.500" stroke="#2d8ceb" stroke-width="2.200" fill="none"/><path d="M437.300 550.200h4v8.800h-4zM442.300 549.600l6.600 5.400-3.200 0.500-1.600 3.600zM441.300 550.200h1v8.800h-1z" fill="#2d8ceb"/><path d="M466.500 550.500h7v5l-3.500 3.500-3.500-3.500z" fill="#c8c8c8"/><path d="M493.500 548.800 l2.300 2.300 -0.400 1.500 -1.600 0.400 -2.300 -2.300 a3.300 3.300 0 0 0 4.200 4.300 l4.300 4.300 a1.250 1.250 0 0 0 1.800 -1.800 l-4.300 -4.300 a3.300 3.300 0 0 0 -4 -4.400z" fill="#c4c4c4"/><path d="M556.5 560.500v-4M577.5 560.500v-4M598.5 560.500v-8.5M619.5 560.500v-4M640.5 560.500v-4M661.5 560.500v-4M682.5 560.500v-4M703.5 560.500v-8.5M724.5 560.500v-4M745.5 560.500v-4M766.5 560.500v-4M787.5 560.500v-4M808.5 560.500v-8.5M829.5 560.500v-4M850.5 560.500v-4M871.5 560.500v-4M892.5 560.500v-4M913.5 560.500v-8.5M934.5 560.500v-4M955.5 560.500v-4M976.5 560.500v-4M997.5 560.500v-4M1018.5 560.500v-8.5M1039.5 560.500v-4M1060.5 560.500v-4M1081.5 560.500v-4M1102.5 560.500v-4M1123.5 560.500v-8.5M1144.5 560.500v-4M1165.5 560.500v-4M1186.5 560.500v-4M1207.5 560.500v-4M1228.5 560.500v-8.5M1249.5 560.500v-4M1270.5 560.500v-4M1291.5 560.500v-4M1312.5 560.500v-4M1333.5 560.500v-8.5M1354.5 560.500v-4M1375.5 560.500v-4M1396.5 560.500v-4" stroke="#505050" stroke-width="1" fill="none"/><path d="M1228.500 645.500h4l-4 4z" fill="#f0f0f0"/><defs><clipPath id="tc4"><rect x="786" y="659.5" width="64.8" height="21"/></clipPath></defs><g clip-path="url(#tc4)"><g transform="translate(786 659.5) scale(0.5400 0.3111)"><rect width="120" height="67.500" fill="#606c63"/><g filter="url(#bl3)"><rect x="-6" y="-6" width="64" height="44" fill="#727d74"/><ellipse cx="1" cy="5" rx="13" ry="19" fill="#b4bdb5"/><ellipse cx="0" cy="0" rx="9" ry="9" fill="#ffffff"/><rect x="96" y="-6" width="30" height="80" fill="#768076"/></g><g filter="url(#bl)"><rect x="100" y="6" width="17" height="58" fill="#818b80"/><rect x="89" y="4" width="6" height="50" fill="#2b302c"/><rect x="80" y="-3" width="14" height="10" fill="#b9c0ba"/><ellipse cx="99.500" cy="22" rx="3.500" ry="3.500" fill="#a9b3a9"/><rect x="-2" y="35" width="28" height="36" fill="#0b0c0e"/><rect x="24" y="34" width="32" height="22" fill="#101214"/><rect x="30" y="31" width="18" height="6" fill="#0f1113"/><rect x="24" y="55" width="34" height="16" fill="#17191c"/></g><g filter="url(#bl2)"><rect x="26" y="50.500" width="26" height="2.600" fill="#7c8583"/><rect x="4" y="52" width="16" height="2.400" fill="#5d6668"/><ellipse cx="35.500" cy="29.500" rx="2" ry="1.300" fill="#d8dacd"/><rect x="44" y="56" width="2.500" height="11" fill="#43494c"/><circle cx="1.500" cy="64" r="1.300" fill="#d0d0d0"/><circle cx="28" cy="65" r="1.300" fill="#c8c8c8"/></g><g filter="url(#bl)"><path d="M48 70 L55 55 L70 46 L92 47 L104 54 L110 70 Z" fill="#1f2432"/><path d="M64 48 L66 36 L86 36 L86 50 L74 58 Z" fill="#513c34"/><ellipse cx="70" cy="31" rx="13" ry="17" fill="#5c423a"/><ellipse cx="62.500" cy="31" rx="5" ry="10" fill="#7c5c4f"/><ellipse cx="79" cy="33" rx="6" ry="13" fill="#3f2d28"/><ellipse cx="71" cy="11" rx="18" ry="12" fill="#0d0d0f"/><ellipse cx="84" cy="22" rx="5.500" ry="10" fill="#0f0e10"/></g><g filter="url(#bl2)"><path d="M58 26.500h7M69 27h7" stroke="#2a1d1a" stroke-width="1.600" fill="none"/><path d="M61 41h5" stroke="#5a3530" stroke-width="1.400" fill="none"/></g></g></g><rect x="786" y="659.500" width="64.800" height="21" fill="#0a140f" opacity="0.550"/><defs><clipPath id="tc5"><rect x="1229" y="659.5" width="67" height="24.5"/></clipPath></defs><g clip-path="url(#tc5)"><g transform="translate(1229 659.5) scale(0.5583 0.3630)"><rect width="120" height="67.500" fill="#4b3529"/><g filter="url(#bl)"><rect x="-4" y="-4" width="10" height="76" fill="#1d1716"/><rect x="112" y="-4" width="14" height="76" fill="#15110f"/><ellipse cx="58" cy="26" rx="22" ry="22" fill="#5d4232"/><path d="M6 60 L8 26 L16 13 L30 12 L36 26 L36 58 Z" fill="#3c475d"/><ellipse cx="25" cy="6" rx="6.500" ry="8" fill="#8a6855"/><ellipse cx="22" cy="1" rx="8" ry="4.500" fill="#121014"/><path d="M74 60 L76 26 L82 12 L98 12 L108 28 L110 60 Z" fill="#3f4a62"/><ellipse cx="88" cy="6" rx="6.500" ry="8" fill="#8a6855"/><ellipse cx="91" cy="1" rx="8" ry="4.500" fill="#121014"/><path d="M66 52 L80 40 L86 46 L72 58 Z" fill="#8a6855"/><rect x="44" y="56" width="70" height="12" fill="#5e3422"/></g><g filter="url(#bl2)"><path d="M8 67 L14 57 L46 53 L50 64 L40 67 Z" fill="#e3e4e2"/><path d="M104 58 L112 54 L116 67 L106 67 Z" fill="#d8d2c8"/><path d="M62 62 L84 57 L88 62 L66 66 Z" fill="#9a7a64"/></g></g></g><rect x="1229" y="659.500" width="67" height="24.500" fill="#0a0806" opacity="0.150"/><rect x="561" y="605.5" width="8.500" height="8.500" rx="0.800" fill="#7d7d7d"/><text x="565.25" y="611.9" font-size="6.800" font-style="italic" font-weight="bold" text-anchor="middle" font-family="Liberation Serif, serif" fill="#3a3a3a">fx</text><rect x="648" y="647.5" width="8.500" height="8.500" rx="0.800" fill="#e9c62e"/><text x="652.25" y="653.9" font-size="6.800" font-style="italic" font-weight="bold" text-anchor="middle" font-family="Liberation Serif, serif" fill="#5a4a08">fx</text><rect x="791" y="647.5" width="8.500" height="8.500" rx="0.800" fill="#7d7d7d"/><text x="795.25" y="653.9" font-size="6.800" font-style="italic" font-weight="bold" text-anchor="middle" font-family="Liberation Serif, serif" fill="#3a3a3a">fx</text><rect x="1237" y="647.5" width="8.500" height="8.500" rx="0.800" fill="#8a8a78"/><text x="1241.25" y="653.9" font-size="6.800" font-style="italic" font-weight="bold" text-anchor="middle" font-family="Liberation Serif, serif" fill="#3c3c30">fx</text><path d="M553.0 696.8L553.0 694.21L554.1 694.74L555.2 693.59L556.3 695.07L557.4 694.09L558.5 694.56L559.6 695.28L560.7 694.47L561.8 695.44L562.9 694.82L564.0 695.51L565.1 695.54L566.2 695.13L567.3 694.69L568.4 695.69L569.5 695.65L570.6 695.32L571.7 695.14L572.8 695.60L573.9 695.84L575.0 695.58L576.1 696.21L577.2 696.42L578.3 696.45L579.4 696.46L580.5 696.46L581.6 696.45L582.7 696.42L583.8 696.46L584.9 696.44L586.0 696.43L587.1 696.45L588.2 696.44L589.3 696.47L590.4 696.47L591.5 696.46L592.6 696.43L593.7 696.45L594.8 696.45L595.9 696.44L597.0 696.44L598.1 696.45L599.2 696.43L600.3 696.43L601.4 696.46L602.5 696.44L603.6 696.44L604.7 696.42L605.8 696.43L606.9 696.45L608.0 696.42L609.1 696.46L610.2 696.45L611.3 696.43L612.4 696.46L613.5 696.44L614.6 696.47L615.7 696.43L616.8 696.43L617.9 696.44L619.0 696.42L620.1 696.45L621.2 696.43L622.3 696.44L623.4 696.44L624.5 696.44L625.6 696.42L626.7 696.42L627.8 696.40L628.9 696.21L630.0 696.27L631.1 695.84L632.2 695.70L633.3 695.26L634.4 695.20L635.5 695.60L636.6 695.36L637.7 694.83L638.8 695.65L639.9 694.84L641.0 695.31L642.1 695.39L643.2 695.47L644.3 694.19L645.4 695.29L646.5 695.03L647.6 694.70L648.7 693.67L649.8 695.21L650.9 694.37L652.0 694.07L653.1 693.21L654.2 693.27L655.3 693.07L656.4 694.45L657.5 694.06L658.6 694.17L659.7 692.76L660.8 692.54L661.9 694.67L663.0 694.61L664.1 694.47L665.2 694.49L666.3 693.87L667.4 693.66L668.5 694.53L669.6 695.20L670.7 694.28L671.8 694.46L672.9 694.10L674.0 693.37L675.1 694.02L676.2 694.45L677.3 694.32L678.4 694.28L679.5 695.45L680.6 694.01L681.7 694.26L682.8 694.12L683.9 694.26L685.0 694.93L686.1 694.91L687.2 695.39L688.3 694.43L689.4 695.41L690.5 695.36L691.6 695.05L692.7 695.09L693.8 694.67L694.9 695.22L696.0 695.29L697.1 694.91L698.2 694.97L699.3 694.29L700.4 695.09L701.5 692.89L702.6 693.50L703.7 694.69L704.8 694.41L705.9 694.15L707.0 694.11L708.1 694.76L709.2 692.89L710.3 692.57L711.4 693.97L712.5 693.99L713.6 695.01L714.7 695.01L715.8 694.52L716.9 694.76L718.0 693.64L719.1 695.09L720.2 695.41L721.3 693.70L722.4 694.55L723.5 695.29L724.6 694.63L725.7 695.54L726.8 694.70L727.9 693.96L729.0 694.14L730.1 694.40L731.2 695.12L732.3 694.90L733.4 695.22L734.5 694.04L735.6 695.07L736.7 694.90L737.8 695.55L738.9 695.76L740.0 695.34L741.1 695.37L742.2 695.63L743.3 695.82L744.4 695.97L745.5 696.16L746.6 696.38L747.7 696.47L748.8 696.45L749.9 696.47L751.0 696.47L752.1 696.45L753.2 696.46L754.3 696.43L755.4 696.42L756.5 696.44L757.6 696.42L758.7 696.41L759.8 696.42L760.9 696.45L762.0 696.46L763.1 696.46L764.2 696.46L765.3 696.46L766.4 696.44L767.5 696.42L768.6 696.42L769.7 696.44L770.8 696.43L771.9 696.43L773.0 696.47L774.1 696.43L775.2 696.42L776.3 696.43L777.4 696.43L778.5 696.44L779.6 696.46L780.7 696.43L781.8 696.45L782.9 696.43L783.0 696.8Z" fill="#86b3e2"/><path d="M785.0 696.8L785.0 696.42L786.1 696.45L787.2 696.45L788.3 696.42L789.4 696.43L790.5 696.46L791.6 696.47L792.7 696.46L793.8 696.42L794.9 696.43L796.0 696.46L797.1 696.43L798.2 696.42L799.3 696.44L800.4 696.45L801.5 696.44L802.6 696.47L803.7 696.47L804.8 696.42L805.9 696.44L807.0 696.44L808.1 696.42L809.2 696.45L810.3 696.43L811.4 696.43L812.5 696.46L813.6 696.46L814.7 696.46L815.8 696.46L816.9 696.44L818.0 696.46L819.1 696.45L820.2 696.47L821.3 696.42L822.4 696.45L823.5 696.27L824.6 696.06L825.7 695.69L826.8 695.80L827.9 695.20L829.0 695.40L830.1 695.19L831.2 695.02L832.3 695.63L833.4 694.81L834.5 695.28L835.6 695.57L836.7 694.18L837.8 695.24L838.9 694.64L840.0 694.10L841.1 694.34L842.2 694.73L843.3 694.25L844.4 694.09L845.5 693.49L846.6 694.99L847.7 693.87L848.8 694.59L849.9 694.50L851.0 693.26L852.1 693.92L853.2 693.81L854.3 693.37L855.4 693.07L856.5 694.24L857.6 693.92L858.7 694.24L859.8 694.31L860.9 694.02L862.0 694.58L863.1 694.50L864.2 694.66L865.3 693.90L866.4 694.37L867.5 694.10L868.6 694.00L869.7 695.14L870.8 694.61L871.9 693.89L873.0 694.00L874.1 695.24L875.2 695.22L876.3 694.52L877.4 695.22L878.5 694.81L879.6 695.13L880.7 693.71L881.8 693.37L882.9 693.03L884.0 694.80L885.1 693.41L886.2 693.54L887.3 694.83L888.4 693.05L889.5 692.91L890.6 694.73L891.7 693.12L892.8 694.44L893.9 694.32L895.0 693.38L896.1 693.80L897.2 695.17L898.3 694.72L899.4 694.63L900.5 694.98L901.6 695.25L902.7 695.05L903.8 694.37L904.9 695.55L906.0 694.88L907.1 695.13L908.2 695.77L909.3 695.43L910.4 695.18L911.5 695.39L912.6 695.92L913.7 695.16L914.8 695.44L915.9 695.43L917.0 696.10L918.1 696.07L919.2 696.24L920.3 696.02L921.4 696.27L922.5 696.37L923.6 696.40L924.7 696.47L925.8 696.43L926.9 696.46L928.0 696.46L929.1 696.42L930.2 696.44L931.3 696.44L932.4 696.47L933.5 696.47L934.6 696.44L935.7 696.45L936.8 696.47L937.9 696.42L939.0 696.44L940.1 696.43L941.2 696.47L942.3 696.43L943.4 696.47L944.5 696.43L945.6 694.81L946.7 695.06L947.8 694.79L948.9 694.30L950.0 695.34L951.1 695.58L952.2 695.10L953.3 695.52L954.4 695.72L955.5 695.69L956.6 695.84L957.7 695.70L958.8 695.60L959.9 695.62L961.0 695.15L962.1 695.64L963.2 695.41L964.3 695.73L965.4 695.53L966.5 695.87L967.6 695.57L968.7 695.82L969.8 694.88L970.9 695.04L972.0 695.48L973.1 695.02L974.2 694.25L975.3 695.47L976.4 694.24L977.5 694.82L978.6 694.65L979.7 693.96L980.8 694.73L981.9 694.46L983.0 694.06L984.1 693.42L985.2 694.69L986.3 693.66L987.4 693.91L988.5 694.06L989.6 694.55L990.7 694.68L991.8 695.30L992.9 695.17L994.0 695.31L995.1 694.06L996.2 695.02L997.3 695.24L998.4 695.42L999.5 694.19L1000.6 694.23L1001.7 694.64L1002.8 695.29L1003.9 695.40L1005.0 695.38L1006.1 695.22L1007.2 695.64L1008.3 695.34L1009.4 695.59L1010.5 694.84L1011.6 694.88L1012.7 695.35L1013.8 695.68L1014.9 694.94L1016.0 695.61L1017.1 695.55L1018.2 695.92L1019.3 695.48L1020.4 695.33L1021.5 695.25L1022.6 695.58L1023.7 695.14L1024.8 695.76L1025.9 695.35L1027.0 695.56L1028.1 695.04L1029.2 695.56L1030.3 695.55L1031.4 695.02L1032.5 695.10L1033.6 694.39L1034.7 694.44L1035.8 693.96L1036.9 694.10L1038.0 693.94L1039.1 693.58L1040.2 694.57L1041.3 694.70L1042.4 693.34L1043.5 695.08L1044.6 693.92L1045.7 694.12L1046.8 695.35L1047.9 693.84L1048.0 696.8Z" fill="#dfe4ea"/><path d="M1050.0 696.8L1050.0 693.67L1051.1 694.27L1052.2 694.15L1053.3 694.10L1054.4 695.35L1055.5 694.77L1056.6 694.87L1057.7 694.45L1058.8 694.59L1059.9 694.64L1061.0 695.04L1062.1 694.71L1063.2 695.02L1064.3 695.05L1065.4 695.62L1066.5 695.86L1067.6 695.75L1068.7 695.49L1069.8 695.77L1070.9 694.92L1072.0 695.21L1073.1 695.09L1074.2 695.04L1075.3 694.91L1076.4 695.10L1077.5 695.73L1078.6 694.51L1079.7 694.49L1080.8 694.80L1081.9 694.67L1083.0 694.37L1084.1 695.38L1085.2 694.06L1086.3 694.94L1087.4 695.25L1088.5 694.82L1089.6 693.80L1090.7 694.89L1091.8 693.69L1092.9 693.14L1094.0 694.19L1095.1 694.44L1096.2 694.23L1097.3 693.80L1098.4 693.64L1099.5 694.01L1100.6 694.00L1101.7 695.23L1102.8 695.12L1103.9 694.96L1105.0 694.09L1106.1 694.97L1107.2 694.57L1108.3 695.58L1109.4 695.54L1110.5 695.27L1111.6 694.73L1112.7 694.78L1113.8 694.88L1114.9 695.44L1116.0 695.20L1117.1 695.30L1118.2 695.33L1119.3 695.75L1120.4 694.89L1121.5 695.68L1122.6 694.80L1123.7 694.83L1124.8 695.86L1125.9 695.31L1127.0 694.83L1128.1 694.58L1129.2 695.19L1130.3 695.38L1131.4 695.41L1132.5 694.24L1133.6 695.31L1134.7 694.64L1135.8 695.32L1136.9 694.58L1138.0 693.70L1139.1 695.20L1140.2 693.78L1141.3 694.34L1142.4 692.82L1143.5 693.41L1144.6 694.68L1145.7 693.29L1146.8 694.33L1147.9 695.36L1149.0 695.43L1150.1 694.48L1151.2 694.53L1152.3 694.76L1153.4 695.02L1154.5 694.47L1155.6 694.43L1156.7 693.00L1157.8 695.09L1158.9 693.08L1160.0 692.86L1161.1 694.79L1162.2 692.84L1163.3 693.52L1164.4 693.25L1165.5 694.73L1166.6 694.65L1167.7 694.66L1168.8 693.49L1169.9 694.26L1171.0 694.65L1172.1 694.41L1173.2 694.64L1174.3 695.09L1175.4 695.28L1176.5 694.05L1177.6 695.13L1178.7 694.24L1179.8 695.39L1180.9 695.47L1182.0 695.29L1183.1 695.75L1184.2 695.68L1185.3 695.35L1186.4 695.58L1187.5 695.80L1188.6 696.04L1189.7 696.12L1190.8 696.30L1191.9 696.49L1193.0 696.43L1194.1 696.47L1195.2 696.43L1196.3 696.44L1197.4 696.43L1198.5 696.43L1199.6 696.45L1200.7 696.47L1201.8 696.42L1202.9 696.46L1204.0 696.44L1205.1 696.45L1206.2 696.45L1207.3 696.43L1208.4 696.42L1209.5 696.46L1210.6 696.43L1211.7 696.45L1212.8 696.44L1213.9 696.45L1215.0 696.46L1216.1 696.46L1217.2 696.46L1218.3 696.42L1219.4 696.44L1220.5 696.46L1221.6 696.42L1222.7 696.41L1223.8 696.44L1224.9 696.46L1226.0 696.46L1227.1 696.46L1228.0 696.8Z" fill="#86b3e2"/><path d="M1229.0 696.8L1229.0 696.43L1230.1 696.43L1231.2 696.43L1232.3 696.43L1233.4 696.42L1234.5 696.41L1235.6 696.41L1236.7 696.42L1237.8 696.42L1238.9 696.42L1240.0 696.42L1241.1 696.43L1242.2 696.43L1243.3 696.43L1244.4 696.41L1245.5 696.43L1246.6 696.42L1247.7 696.42L1248.8 696.41L1249.9 696.43L1251.0 696.43L1252.1 696.43L1253.2 696.42L1254.3 696.42L1255.4 696.41L1256.5 696.41L1257.6 696.41L1258.7 696.43L1259.8 696.43L1260.9 696.42L1262.0 696.41L1263.1 696.42L1264.2 696.42L1265.3 696.43L1266.4 696.42L1267.5 696.41L1268.6 696.41L1269.7 696.41L1270.8 696.41L1271.9 696.43L1273.0 696.43L1274.1 696.43L1275.2 696.42L1276.3 696.42L1277.4 696.41L1278.5 696.41L1279.6 696.42L1280.7 696.41L1281.8 696.42L1282.9 696.42L1284.0 696.43L1285.1 696.41L1286.2 696.43L1287.3 696.41L1288.4 696.42L1289.5 696.43L1290.6 696.43L1291.7 696.43L1292.8 696.42L1293.9 696.42L1295.0 695.97L1296.1 695.40L1297.2 694.52L1298.3 693.78L1299.4 693.31L1300.5 694.36L1301.6 694.03L1302.7 694.52L1303.8 694.25L1304.9 694.08L1306.0 693.60L1307.1 693.83L1308.2 693.56L1309.3 693.88L1310.4 694.05L1311.5 693.99L1312.6 693.23L1313.7 693.43L1314.8 693.78L1315.9 694.03L1317.0 693.48L1318.1 693.24L1319.2 693.48L1320.3 693.63L1321.4 693.15L1322.5 692.84L1323.6 693.61L1324.7 693.82L1325.8 693.48L1326.9 693.40L1328.0 693.13L1329.1 693.69L1330.2 693.07L1331.3 693.17L1332.4 693.48L1333.5 693.84L1334.6 693.11L1335.7 693.84L1336.8 693.41L1337.9 694.04L1339.0 694.11L1340.1 693.67L1341.2 694.15L1342.3 693.62L1343.4 694.06L1344.5 694.36L1345.6 694.35L1346.7 694.20L1347.8 693.99L1348.9 693.73L1350.0 694.38L1351.1 694.13L1352.2 694.23L1353.3 693.47L1354.4 694.15L1355.5 694.15L1356.6 694.05L1357.7 693.59L1358.8 692.91L1359.9 692.77L1361.0 692.80L1362.1 692.32L1363.2 692.25L1364.3 692.92L1365.4 693.01L1366.5 691.84L1367.6 692.01L1368.7 692.99L1369.8 691.99L1370.9 692.38L1372.0 692.37L1373.1 692.44L1374.2 692.71L1375.3 693.00L1376.4 692.65L1377.5 692.63L1378.6 691.89L1379.7 693.16L1380.8 692.18L1381.9 693.30L1383.0 693.25L1384.1 692.86L1385.2 693.03L1386.3 693.60L1387.4 694.12L1388.5 693.82L1389.6 694.02L1390.7 693.62L1391.8 694.33L1392.9 694.22L1394.0 693.80L1395.1 694.51L1396.2 694.16L1397.3 693.75L1398.4 693.70L1399.0 696.8Z" fill="#86b3e2"/><path d="M553.0 706.2L553.0 704.36L554.1 704.44L555.2 704.43L556.3 702.48L557.4 704.11L558.5 703.14L559.6 702.97L560.7 704.20L561.8 704.41L562.9 703.31L564.0 704.02L565.1 704.68L566.2 704.11L567.3 704.77L568.4 704.91L569.5 705.29L570.6 704.59L571.7 704.57L572.8 704.95L573.9 704.85L575.0 705.56L576.1 705.51L577.2 705.84L578.3 705.82L579.4 705.82L580.5 705.85L581.6 705.86L582.7 705.85L583.8 705.84L584.9 705.82L586.0 705.86L587.1 705.83L588.2 705.83L589.3 705.82L590.4 705.83L591.5 705.84L592.6 705.85L593.7 705.85L594.8 705.85L595.9 705.83L597.0 705.87L598.1 705.86L599.2 705.83L600.3 705.86L601.4 705.87L602.5 705.87L603.6 705.84L604.7 705.85L605.8 705.82L606.9 705.82L608.0 705.81L609.1 705.86L610.2 705.87L611.3 705.86L612.4 705.84L613.5 705.83L614.6 705.84L615.7 705.86L616.8 705.85L617.9 705.84L619.0 705.83L620.1 705.83L621.2 705.82L622.3 705.83L623.4 705.86L624.5 705.82L625.6 705.85L626.7 705.84L627.8 705.81L628.9 705.59L630.0 705.61L631.1 705.48L632.2 705.37L633.3 705.34L634.4 704.54L635.5 704.68L636.6 704.83L637.7 704.61L638.8 703.57L639.9 704.16L641.0 704.61L642.1 703.61L643.2 703.84L644.3 703.20L645.4 704.74L646.5 704.00L647.6 703.27L648.7 703.13L649.8 702.87L650.9 704.65L652.0 704.04L653.1 704.38L654.2 704.17L655.3 702.20L656.4 703.09L657.5 702.14L658.6 703.53L659.7 702.21L660.8 703.28L661.9 703.78L663.0 702.41L664.1 701.99L665.2 704.22L666.3 702.99L667.4 702.99L668.5 704.04L669.6 703.73L670.7 704.32L671.8 704.23L672.9 704.18L674.0 703.52L675.1 703.50L676.2 704.45L677.3 704.86L678.4 704.32L679.5 703.74L680.6 704.65L681.7 704.45L682.8 704.65L683.9 703.66L685.0 704.07L686.1 704.88L687.2 704.79L688.3 704.25L689.4 703.92L690.5 703.69L691.6 704.68L692.7 704.49L693.8 703.33L694.9 703.85L696.0 704.06L697.1 703.94L698.2 702.34L699.3 703.82L700.4 703.13L701.5 703.61L702.6 703.42L703.7 702.21L704.8 701.83L705.9 703.50L707.0 703.95L708.1 702.57L709.2 703.97L710.3 704.50L711.4 702.28L712.5 703.54L713.6 702.65L714.7 703.71L715.8 702.71L716.9 703.73L718.0 704.43L719.1 704.78L720.2 703.78L721.3 703.68L722.4 703.26L723.5 704.79L724.6 703.89L725.7 704.35L726.8 704.14L727.9 704.75L729.0 704.52L730.1 704.10L731.2 703.37L732.3 704.76L733.4 704.03L734.5 703.38L735.6 703.89L736.7 705.01L737.8 705.17L738.9 704.45L740.0 704.60L741.1 705.14L742.2 705.53L743.3 705.16L744.4 705.54L745.5 705.51L746.6 705.73L747.7 705.86L748.8 705.86L749.9 705.83L751.0 705.86L752.1 705.85L753.2 705.82L754.3 705.82L755.4 705.86L756.5 705.86L757.6 705.85L758.7 705.84L759.8 705.85L760.9 705.86L762.0 705.86L763.1 705.83L764.2 705.82L765.3 705.87L766.4 705.84L767.5 705.83L768.6 705.87L769.7 705.82L770.8 705.86L771.9 705.84L773.0 705.84L774.1 705.83L775.2 705.85L776.3 705.85L777.4 705.84L778.5 705.85L779.6 705.83L780.7 705.84L781.8 705.85L782.9 705.87L783.0 706.2Z" fill="#86b3e2"/><path d="M785.0 705.0L785.0 704.64L786.1 704.65L787.2 704.66L788.3 704.63L789.4 704.63L790.5 704.65L791.6 704.66L792.7 704.65L793.8 704.67L794.9 704.67L796.0 704.65L797.1 704.67L798.2 704.65L799.3 704.65L800.4 704.67L801.5 704.64L802.6 704.67L803.7 704.63L804.8 704.63L805.9 704.65L807.0 704.67L808.1 704.65L809.2 704.65L810.3 704.62L811.4 704.66L812.5 704.63L813.6 704.62L814.7 704.63L815.8 704.63L816.9 704.66L818.0 704.62L819.1 704.65L820.2 704.62L821.3 704.62L822.4 704.66L823.5 704.40L824.6 704.12L825.7 704.36L826.8 704.05L827.9 703.54L829.0 703.96L830.1 702.94L831.2 703.56L832.3 702.58L833.4 703.52L834.5 702.94L835.6 702.21L836.7 703.40L837.8 703.27L838.9 702.78L840.0 703.07L841.1 703.57L842.2 703.22L843.3 703.21L844.4 701.45L845.5 701.93L846.6 701.35L847.7 703.01L848.8 701.48L849.9 703.09L851.0 702.06L852.1 701.80L853.2 702.50L854.3 701.29L855.4 702.11L856.5 702.12L857.6 701.52L858.7 703.31L859.8 701.50L860.9 702.35L862.0 702.89L863.1 702.21L864.2 703.25L865.3 702.01L866.4 702.78L867.5 703.17L868.6 702.50L869.7 703.03L870.8 703.47L871.9 702.44L873.0 703.64L874.1 702.16L875.2 703.16L876.3 702.32L877.4 701.51L878.5 702.26L879.6 702.00L880.7 702.73L881.8 703.42L882.9 703.32L884.0 703.02L885.1 701.85L886.2 702.30L887.3 702.12L888.4 701.22L889.5 703.10L890.6 702.91L891.7 702.00L892.8 703.47L893.9 703.55L895.0 702.87L896.1 703.43L897.2 703.00L898.3 703.30L899.4 702.71L900.5 702.75L901.6 703.43L902.7 702.73L903.8 702.98L904.9 703.55L906.0 702.51L907.1 703.61L908.2 703.80L909.3 703.92L910.4 703.36L911.5 703.22L912.6 703.42L913.7 703.87L914.8 704.06L915.9 704.31L917.0 703.96L918.1 704.11L919.2 704.30L920.3 704.27L921.4 704.42L922.5 704.41L923.6 704.56L924.7 704.68L925.8 704.63L926.9 704.67L928.0 704.64L929.1 704.65L930.2 704.66L931.3 704.67L932.4 704.63L933.5 704.67L934.6 704.64L935.7 704.62L936.8 704.66L937.9 704.66L939.0 704.64L940.1 704.65L941.2 704.64L942.3 704.63L943.4 704.66L944.5 704.66L945.6 703.27L946.7 703.74L947.8 702.46L948.9 702.71L950.0 702.90L951.1 703.95L952.2 702.89L953.3 703.09L954.4 703.49L955.5 703.22L956.6 703.59L957.7 703.87L958.8 704.02L959.9 703.89L961.0 704.10L962.1 703.79L963.2 703.34L964.3 703.38L965.4 703.18L966.5 703.28L967.6 703.75L968.7 703.36L969.8 703.45L970.9 702.93L972.0 703.21L973.1 703.52L974.2 702.89L975.3 702.30L976.4 703.44L977.5 702.25L978.6 703.71L979.7 703.22L980.8 703.23L981.9 702.20L983.0 701.75L984.1 702.10L985.2 702.92L986.3 701.76L987.4 702.90L988.5 703.08L989.6 701.71L990.7 702.30L991.8 702.20L992.9 702.30L994.0 701.73L995.1 702.77L996.2 702.14L997.3 702.47L998.4 702.27L999.5 703.07L1000.6 702.67L1001.7 702.99L1002.8 703.45L1003.9 703.64L1005.0 703.14L1006.1 703.91L1007.2 702.92L1008.3 703.89L1009.4 704.06L1010.5 703.99L1011.6 703.12L1012.7 703.77L1013.8 703.99L1014.9 704.11L1016.0 704.09L1017.1 703.40L1018.2 703.43L1019.3 703.32L1020.4 703.23L1021.5 703.98L1022.6 703.29L1023.7 703.52L1024.8 702.85L1025.9 702.76L1027.0 702.56L1028.1 703.76L1029.2 702.41L1030.3 702.24L1031.4 702.09L1032.5 703.53L1033.6 703.31L1034.7 703.45L1035.8 703.57L1036.9 701.92L1038.0 701.95L1039.1 702.28L1040.2 701.87L1041.3 702.27L1042.4 702.99L1043.5 703.38L1044.6 703.40L1045.7 702.09L1046.8 703.23L1047.9 703.04L1048.0 705.0Z" fill="#dfe4ea"/><path d="M1050.0 706.2L1050.0 704.00L1051.1 704.83L1052.2 704.43L1053.3 704.44L1054.4 703.76L1055.5 704.42L1056.6 704.56L1057.7 703.66L1058.8 704.42L1059.9 704.01L1061.0 704.39L1062.1 705.19L1063.2 704.75L1064.3 704.76L1065.4 704.40L1066.5 704.90L1067.6 704.51L1068.7 704.70L1069.8 705.05L1070.9 704.29L1072.0 705.16L1073.1 704.26L1074.2 705.01L1075.3 705.20L1076.4 704.89L1077.5 704.05L1078.6 703.64L1079.7 705.05L1080.8 704.22L1081.9 704.15L1083.0 703.53L1084.1 704.57L1085.2 703.92L1086.3 704.15L1087.4 703.11L1088.5 704.23L1089.6 702.74L1090.7 704.12L1091.8 704.24L1092.9 703.15L1094.0 703.58L1095.1 704.45L1096.2 703.28L1097.3 704.53L1098.4 703.00L1099.5 703.24L1100.6 703.10L1101.7 703.49L1102.8 704.10L1103.9 704.07L1105.0 704.14L1106.1 703.31L1107.2 704.81L1108.3 703.52L1109.4 705.00L1110.5 704.76L1111.6 704.73L1112.7 703.89L1113.8 704.51L1114.9 704.72L1116.0 704.15L1117.1 704.98L1118.2 704.74L1119.3 704.68L1120.4 704.45L1121.5 704.46L1122.6 704.57L1123.7 704.89L1124.8 704.90L1125.9 705.07L1127.0 704.20L1128.1 704.37L1129.2 704.20L1130.3 704.92L1131.4 704.48L1132.5 703.90L1133.6 704.12L1134.7 704.79L1135.8 704.16L1136.9 703.33L1138.0 704.44L1139.1 704.48L1140.2 704.22L1141.3 703.34L1142.4 702.33L1143.5 704.18L1144.6 704.26L1145.7 704.14L1146.8 704.07L1147.9 703.75L1149.0 704.52L1150.1 704.20L1151.2 704.45L1152.3 702.77L1153.4 703.14L1154.5 704.43L1155.6 702.26L1156.7 704.28L1157.8 703.49L1158.9 701.86L1160.0 702.37L1161.1 702.61L1162.2 703.47L1163.3 704.15L1164.4 703.25L1165.5 704.52L1166.6 704.38L1167.7 704.07L1168.8 704.78L1169.9 704.04L1171.0 703.17L1172.1 703.24L1173.2 703.53L1174.3 703.08L1175.4 703.99L1176.5 704.69L1177.6 704.01L1178.7 704.46L1179.8 704.10L1180.9 704.05L1182.0 704.79L1183.1 704.76L1184.2 704.74L1185.3 705.16L1186.4 705.41L1187.5 705.25L1188.6 705.34L1189.7 705.55L1190.8 705.73L1191.9 705.88L1193.0 705.83L1194.1 705.83L1195.2 705.84L1196.3 705.85L1197.4 705.83L1198.5 705.86L1199.6 705.85L1200.7 705.83L1201.8 705.83L1202.9 705.83L1204.0 705.86L1205.1 705.85L1206.2 705.84L1207.3 705.84L1208.4 705.85L1209.5 705.83L1210.6 705.82L1211.7 705.86L1212.8 705.83L1213.9 705.83L1215.0 705.85L1216.1 705.84L1217.2 705.82L1218.3 705.87L1219.4 705.84L1220.5 705.86L1221.6 705.83L1222.7 705.82L1223.8 705.84L1224.9 705.86L1226.0 705.84L1227.1 705.84L1228.0 706.2Z" fill="#86b3e2"/><path d="M1229.0 706.2L1229.0 705.81L1230.1 705.82L1231.2 705.82L1232.3 705.81L1233.4 705.82L1234.5 705.82L1235.6 705.81L1236.7 705.83L1237.8 705.82L1238.9 705.82L1240.0 705.81L1241.1 705.83L1242.2 705.81L1243.3 705.82L1244.4 705.83L1245.5 705.83L1246.6 705.82L1247.7 705.83L1248.8 705.82L1249.9 705.82L1251.0 705.82L1252.1 705.83L1253.2 705.83L1254.3 705.83L1255.4 705.81L1256.5 705.81L1257.6 705.82L1258.7 705.83L1259.8 705.81L1260.9 705.82L1262.0 705.83L1263.1 705.83L1264.2 705.81L1265.3 705.81L1266.4 705.82L1267.5 705.82L1268.6 705.82L1269.7 705.83L1270.8 705.81L1271.9 705.83L1273.0 705.82L1274.1 705.81L1275.2 705.81L1276.3 705.82L1277.4 705.83L1278.5 705.82L1279.6 705.83L1280.7 705.81L1281.8 705.83L1282.9 705.81L1284.0 705.83L1285.1 705.82L1286.2 705.83L1287.3 705.82L1288.4 705.83L1289.5 705.83L1290.6 705.81L1291.7 705.83L1292.8 705.83L1293.9 705.83L1295.0 705.29L1296.1 704.64L1297.2 703.84L1298.3 703.11L1299.4 702.74L1300.5 703.17L1301.6 703.22L1302.7 703.88L1303.8 703.19L1304.9 703.09L1306.0 703.15L1307.1 703.68L1308.2 703.01L1309.3 703.13L1310.4 703.66L1311.5 703.62L1312.6 702.64L1313.7 702.88L1314.8 703.24L1315.9 703.34L1317.0 703.26L1318.1 703.12L1319.2 702.49L1320.3 702.93L1321.4 703.12L1322.5 702.26L1323.6 702.37L1324.7 703.07L1325.8 702.26L1326.9 702.59L1328.0 702.41L1329.1 702.57L1330.2 702.36L1331.3 702.52L1332.4 702.52L1333.5 703.25L1334.6 702.80L1335.7 703.02L1336.8 702.88L1337.9 703.24L1339.0 702.89L1340.1 703.26L1341.2 703.58L1342.3 703.65L1343.4 703.77L1344.5 703.50L1345.6 703.89L1346.7 703.56L1347.8 703.82L1348.9 703.52L1350.0 703.48L1351.1 703.40L1352.2 703.05L1353.3 703.75L1354.4 702.89L1355.5 703.14L1356.6 702.94L1357.7 702.70L1358.8 702.37L1359.9 702.76L1361.0 702.58L1362.1 701.77L1363.2 702.77L1364.3 701.90L1365.4 701.78L1366.5 702.53L1367.6 701.61L1368.7 701.42L1369.8 700.99L1370.9 701.85L1372.0 700.85L1373.1 701.57L1374.2 701.63L1375.3 701.07L1376.4 702.42L1377.5 701.51L1378.6 701.75L1379.7 702.27L1380.8 701.71L1381.9 702.50L1383.0 702.51L1384.1 702.60L1385.2 702.49L1386.3 703.24L1387.4 703.14L1388.5 703.27L1389.6 703.26L1390.7 703.11L1391.8 703.64L1392.9 703.23L1394.0 703.61L1395.1 703.52L1396.2 703.68L1397.3 703.42L1398.4 702.91L1399.0 706.2Z" fill="#86b3e2"/><rect x="791" y="691" width="8.500" height="7.500" rx="0.800" fill="#8a8a8a" stroke="#c8c8c8" stroke-width="0.600"/><text x="795.200" y="697" font-size="6.500" font-style="italic" font-weight="bold" text-anchor="middle" font-family="Liberation Serif, serif" fill="#444">fx</text><rect x="1237" y="690" width="8.500" height="8" rx="0.800" fill="#77777a" stroke="#b8b8b8" stroke-width="0.700"/><text x="1241.200" y="696.2" font-size="6.500" font-style="italic" font-weight="bold" text-anchor="middle" font-family="Liberation Serif, serif" fill="#3a3a3a">fx</text><rect x="1237" y="710" width="8.500" height="8" rx="0.800" fill="#77777a" stroke="#b8b8b8" stroke-width="0.700"/><text x="1241.200" y="716.2" font-size="6.500" font-style="italic" font-weight="bold" text-anchor="middle" font-family="Liberation Serif, serif" fill="#3a3a3a">fx</text><path d="M715.500 551.500h10.500v6.500l-2.500 3.200h-5.500l-2.500-3.200z" fill="#2d8ceb"/><circle cx="1404" cy="574" r="3.400" fill="#232323" stroke="#a8a8a8" stroke-width="1.500"/><circle cx="1404" cy="679" r="3.400" fill="#232323" stroke="#a8a8a8" stroke-width="1.500"/><circle cx="1404" cy="692" r="3.400" fill="#232323" stroke="#a8a8a8" stroke-width="1.500"/><circle cx="1404" cy="805" r="3.400" fill="#232323" stroke="#a8a8a8" stroke-width="1.500"/><circle cx="384" cy="815.500" r="3.400" fill="#232323" stroke="#a8a8a8" stroke-width="1.500"/><circle cx="448" cy="815.500" r="3.400" fill="#232323" stroke="#a8a8a8" stroke-width="1.500"/><rect x="406.8" y="592.0" width="6.600" height="4.600" rx="0.500" fill="#d4d4d4"/><path d="M407.59999999999997 592.0v-1.700a1.900 1.900 0 0 1 3.800 0v0.600" fill="none" stroke="#d4d4d4" stroke-width="1.150"/><rect x="409.55" y="593.4" width="1.300" height="1.900" fill="#232323"/><rect x="406.8" y="622.4000000000001" width="6.600" height="4.600" rx="0.500" fill="#d4d4d4"/><path d="M407.59999999999997 622.4000000000001v-1.700a1.900 1.900 0 0 1 3.800 0v0.600" fill="none" stroke="#d4d4d4" stroke-width="1.150"/><rect x="409.55" y="623.8000000000001" width="1.300" height="1.900" fill="#232323"/><rect x="406.8" y="663.4000000000001" width="6.600" height="4.600" rx="0.500" fill="#d4d4d4"/><path d="M407.59999999999997 663.4000000000001v-1.700a1.900 1.900 0 0 1 3.800 0v0.600" fill="none" stroke="#d4d4d4" stroke-width="1.150"/><rect x="409.55" y="664.8000000000001" width="1.300" height="1.900" fill="#232323"/><rect x="406.8" y="695.0" width="6.600" height="4.600" rx="0.500" fill="#d4d4d4"/><path d="M407.59999999999997 695.0v-1.700a1.900 1.900 0 0 1 3.800 0v0.600" fill="none" stroke="#d4d4d4" stroke-width="1.150"/><rect x="409.55" y="696.4" width="1.300" height="1.900" fill="#232323"/><rect x="406.8" y="715.0" width="6.600" height="4.600" rx="0.500" fill="#d4d4d4"/><path d="M407.59999999999997 715.0v-1.700a1.900 1.900 0 0 1 3.800 0v0.600" fill="none" stroke="#d4d4d4" stroke-width="1.150"/><rect x="409.55" y="716.4" width="1.300" height="1.900" fill="#232323"/><rect x="406.8" y="734.0" width="6.600" height="4.600" rx="0.500" fill="#d4d4d4"/><path d="M407.59999999999997 734.0v-1.700a1.900 1.900 0 0 1 3.800 0v0.600" fill="none" stroke="#d4d4d4" stroke-width="1.150"/><rect x="409.55" y="735.4" width="1.300" height="1.900" fill="#232323"/><rect x="449.0" y="589.8000000000001" width="6.600" height="2.900" rx="0.900" fill="none" stroke="#d6d6d6" stroke-width="1.100"/><rect x="449.0" y="593.5" width="6.600" height="2.900" rx="0.900" fill="none" stroke="#d6d6d6" stroke-width="1.100"/><path d="M455.8 591.3000000000001l2.800-1.200v6l-2.800-1.200z" fill="#d6d6d6"/><rect x="449.0" y="609.8000000000001" width="6.600" height="2.900" rx="0.900" fill="none" stroke="#d6d6d6" stroke-width="1.100"/><rect x="449.0" y="613.5" width="6.600" height="2.900" rx="0.900" fill="none" stroke="#d6d6d6" stroke-width="1.100"/><path d="M455.8 611.3000000000001l2.800-1.200v6l-2.800-1.200z" fill="#d6d6d6"/><rect x="449.0" y="651.5" width="6.600" height="2.900" rx="0.900" fill="none" stroke="#d6d6d6" stroke-width="1.100"/><rect x="449.0" y="655.1999999999999" width="6.600" height="2.900" rx="0.900" fill="none" stroke="#d6d6d6" stroke-width="1.100"/><path d="M455.8 653.0l2.800-1.200v6l-2.800-1.200z" fill="#d6d6d6"/><rect x="449.0" y="693.0" width="6.600" height="2.900" rx="0.900" fill="none" stroke="#d6d6d6" stroke-width="1.100"/><rect x="449.0" y="696.6999999999999" width="6.600" height="2.900" rx="0.900" fill="none" stroke="#d6d6d6" stroke-width="1.100"/><path d="M455.8 694.5l2.800-1.200v6l-2.800-1.200z" fill="#d6d6d6"/><rect x="449.0" y="713.0" width="6.600" height="2.900" rx="0.900" fill="none" stroke="#d6d6d6" stroke-width="1.100"/><rect x="449.0" y="716.6999999999999" width="6.600" height="2.900" rx="0.900" fill="none" stroke="#d6d6d6" stroke-width="1.100"/><path d="M455.8 714.5l2.800-1.200v6l-2.800-1.200z" fill="#d6d6d6"/><path d="M469.8 594q5.200-5 10.400 0q-5.200 5-10.400 0z" fill="none" stroke="#e0e0e0" stroke-width="1.400"/><circle cx="475" cy="594" r="1.800" fill="#e0e0e0"/><path d="M469.8 613.8q5.200-5 10.400 0q-5.200 5-10.400 0z" fill="none" stroke="#2f8bea" stroke-width="1.400"/><circle cx="475" cy="613.8" r="1.800" fill="#2f8bea"/><path d="M470.8 609.5999999999999l8.800 8.400" stroke="#2f8bea" stroke-width="1"/><path d="M469.8 655.5q5.200-5 10.400 0q-5.200 5-10.400 0z" fill="none" stroke="#e0e0e0" stroke-width="1.400"/><circle cx="475" cy="655.5" r="1.800" fill="#e0e0e0"/><rect x="514.800" y="691" width="4.400" height="7.600" rx="2.200" fill="#cfcfcf"/><path d="M513 695.5v1.200a4 4 0 0 0 8 0v-1.200M517 700.5v2M515 702.5h4" fill="none" stroke="#cfcfcf" stroke-width="1"/><rect x="514.800" y="711" width="4.400" height="7.600" rx="2.200" fill="#cfcfcf"/><path d="M513 715.5v1.200a4 4 0 0 0 8 0v-1.200M517 720.5v2M515 722.5h4" fill="none" stroke="#cfcfcf" stroke-width="1"/><path d="M536.500 729.500l4 3.700-4 3.700zM546 729.500l-4 3.700 4 3.700z" fill="#d8d8d8"/><path d="M541.200 730v6.500" stroke="#d8d8d8" stroke-width="0.800"/><path d="M1479.500 530v272" stroke="#6a6a6a" stroke-width="1" stroke-dasharray="1 1.670" fill="none"/><path d="M1478 533.5h4" stroke="#6a6a6a" stroke-width="1"/><path d="M1478 560.3h4" stroke="#6a6a6a" stroke-width="1"/><path d="M1478 587.1h4" stroke="#6a6a6a" stroke-width="1"/><path d="M1478 613.9h4" stroke="#6a6a6a" stroke-width="1"/><path d="M1478 640.7h4" stroke="#6a6a6a" stroke-width="1"/><path d="M1478 667.5h4" stroke="#6a6a6a" stroke-width="1"/><path d="M1478 694.3h4" stroke="#6a6a6a" stroke-width="1"/><path d="M1478 721.1h4" stroke="#6a6a6a" stroke-width="1"/><path d="M1478 747.9h4" stroke="#6a6a6a" stroke-width="1"/><path d="M1478 774.7h4" stroke="#6a6a6a" stroke-width="1"/></svg>
<div style="left:937.3px;top:51.3px;width:204.7px;height:795.7px;background:#f2f2f2;border:1px solid #fafafa;border-bottom:none;box-shadow:0 0 0 0.500px #d0d0d0;"></div><div style="top:55.70px;font-size:9.35px;line-height:13px;color:#141414;white-space:nowrap;left:964.5999999999999px;letter-spacing:0.100px;">剪切</div><div style="top:72.91px;font-size:9.35px;line-height:13px;color:#141414;white-space:nowrap;left:964.5999999999999px;letter-spacing:0.100px;">复制</div><div style="top:90.11px;font-size:9.35px;line-height:13px;color:#8f8f8f;white-space:nowrap;left:964.5999999999999px;letter-spacing:0.100px;">粘贴属性...</div><div style="top:107.32px;font-size:9.35px;line-height:13px;color:#141414;white-space:nowrap;left:964.5999999999999px;letter-spacing:0.100px;">删除属性...</div><div style="top:124.52px;font-size:9.35px;line-height:13px;color:#141414;white-space:nowrap;left:964.5999999999999px;letter-spacing:0.100px;">清除</div><div style="top:141.73px;font-size:9.35px;line-height:13px;color:#141414;white-space:nowrap;left:964.5999999999999px;letter-spacing:0.100px;">波纹删除</div><div style="left:963.8px;top:158.51999999999998px;width:176.2px;height:1px;background:#dadada;"></div><div style="top:164.71px;font-size:9.35px;line-height:13px;color:#141414;white-space:nowrap;left:964.5999999999999px;letter-spacing:0.100px;">编辑原始</div><div style="top:181.92px;font-size:9.35px;line-height:13px;color:#141414;white-space:nowrap;left:964.5999999999999px;letter-spacing:0.219px;">在 <span style="font-size:10.150px;">Adobe Audition</span> 中编辑剪辑</div><div style="top:199.12px;font-size:9.35px;line-height:13px;color:#8f8f8f;white-space:nowrap;left:964.5999999999999px;letter-spacing:0.100px;">许可...</div><div style="top:216.33px;font-size:9.35px;line-height:13px;color:#141414;white-space:nowrap;left:964.5999999999999px;letter-spacing:0.077px;">使用 <span style="font-size:10.150px;">After Effects</span> 合成替换</div><div style="top:233.53px;font-size:9.35px;line-height:13px;color:#8f8f8f;white-space:nowrap;left:964.5999999999999px;letter-spacing:0.100px;">使用剪辑替换</div><div style="top:250.74px;font-size:9.35px;line-height:13px;color:#141414;white-space:nowrap;left:964.5999999999999px;letter-spacing:0.100px;">渲染和替换...</div><div style="top:267.94px;font-size:9.35px;line-height:13px;color:#8f8f8f;white-space:nowrap;left:964.5999999999999px;letter-spacing:0.100px;">恢复未渲染的内容</div><div style="left:963.8px;top:284.7349999999999px;width:176.2px;height:1px;background:#dadada;"></div><div style="top:290.93px;font-size:9.35px;line-height:13px;color:#141414;white-space:nowrap;left:964.5999999999999px;letter-spacing:0.100px;">启用</div><div style="left:939.8px;top:287.6249999999999px;width:17px;height:18.604999999999997px;background:#8fc4f0;"></div><div style="left:939.8px;top:306.1299999999999px;width:199.7px;height:16.404999999999998px;background:#8fc4f0;"></div><div style="top:308.13px;font-size:9.35px;line-height:13px;color:#141414;white-space:nowrap;left:964.5999999999999px;letter-spacing:0.100px;">取消链接</div><div style="top:325.34px;font-size:9.35px;line-height:13px;color:#8f8f8f;white-space:nowrap;left:964.5999999999999px;letter-spacing:0.100px;">编组</div><div style="top:342.54px;font-size:9.35px;line-height:13px;color:#8f8f8f;white-space:nowrap;left:964.5999999999999px;letter-spacing:0.100px;">取消编组</div><div style="top:359.75px;font-size:9.35px;line-height:13px;color:#8f8f8f;white-space:nowrap;left:964.5999999999999px;letter-spacing:0.100px;">同步</div><div style="top:376.95px;font-size:9.35px;line-height:13px;color:#8f8f8f;white-space:nowrap;left:964.5999999999999px;letter-spacing:0.100px;">合并剪辑...</div><div style="top:394.16px;font-size:9.35px;line-height:13px;color:#141414;white-space:nowrap;left:964.5999999999999px;letter-spacing:0.100px;">嵌套...</div><div style="top:411.36px;font-size:9.35px;line-height:13px;color:#141414;white-space:nowrap;left:964.5999999999999px;letter-spacing:0.100px;">制作子序列</div><div style="top:428.57px;font-size:9.35px;line-height:13px;color:#8f8f8f;white-space:nowrap;left:964.5999999999999px;letter-spacing:0.100px;">多机位</div><div style="left:963.8px;top:445.35999999999973px;width:176.2px;height:1px;background:#dadada;"></div><div style="top:451.55px;font-size:9.35px;line-height:13px;color:#141414;white-space:nowrap;left:964.5999999999999px;letter-spacing:0.100px;">标签</div><div style="left:963.8px;top:468.3449999999997px;width:176.2px;height:1px;background:#dadada;"></div><div style="top:474.54px;font-size:9.35px;line-height:13px;color:#141414;white-space:nowrap;left:964.5999999999999px;letter-spacing:0.100px;">速度/持续时间...</div><div style="left:963.8px;top:491.32999999999964px;width:176.2px;height:1px;background:#dadada;"></div><div style="top:497.52px;font-size:9.35px;line-height:13px;color:#141414;white-space:nowrap;left:964.5999999999999px;letter-spacing:0.100px;">音频增益...</div><div style="top:514.73px;font-size:9.35px;line-height:13px;color:#141414;white-space:nowrap;left:964.5999999999999px;letter-spacing:0.100px;">音频声道...</div><div style="left:963.8px;top:531.5199999999996px;width:176.2px;height:1px;background:#dadada;"></div><div style="top:537.71px;font-size:9.35px;line-height:13px;color:#141414;white-space:nowrap;left:964.5999999999999px;letter-spacing:0.100px;">帧定格选项...</div><div style="top:554.92px;font-size:9.35px;line-height:13px;color:#141414;white-space:nowrap;left:964.5999999999999px;letter-spacing:0.100px;">添加帧定格</div><div style="top:572.12px;font-size:9.35px;line-height:13px;color:#141414;white-space:nowrap;left:964.5999999999999px;letter-spacing:0.100px;">插入帧定格分段</div><div style="top:589.33px;font-size:9.35px;line-height:13px;color:#141414;white-space:nowrap;left:964.5999999999999px;letter-spacing:0.100px;">场选项...</div><div style="top:606.53px;font-size:9.35px;line-height:13px;color:#141414;white-space:nowrap;left:964.5999999999999px;letter-spacing:0.100px;">时间插值</div><div style="top:623.74px;font-size:9.35px;line-height:13px;color:#141414;white-space:nowrap;left:964.5999999999999px;letter-spacing:0.100px;">缩放为帧大小</div><div style="top:640.94px;font-size:9.35px;line-height:13px;color:#141414;white-space:nowrap;left:964.5999999999999px;letter-spacing:0.100px;">设为帧大小</div><div style="top:658.15px;font-size:9.35px;line-height:13px;color:#141414;white-space:nowrap;left:964.5999999999999px;letter-spacing:0.100px;">调整图层</div><div style="left:963.8px;top:674.9399999999999px;width:176.2px;height:1px;background:#dadada;"></div><div style="top:681.13px;font-size:9.35px;line-height:13px;color:#8f8f8f;white-space:nowrap;left:964.5999999999999px;letter-spacing:0.100px;">链接媒体...</div><div style="top:698.34px;font-size:9.35px;line-height:13px;color:#141414;white-space:nowrap;left:964.5999999999999px;letter-spacing:0.100px;">设为脱机...</div><div style="left:963.8px;top:715.13px;width:176.2px;height:1px;background:#dadada;"></div><div style="top:721.32px;font-size:9.35px;line-height:13px;color:#141414;white-space:nowrap;left:964.5999999999999px;letter-spacing:0.100px;">重命名...</div><div style="top:738.53px;font-size:9.35px;line-height:13px;color:#141414;white-space:nowrap;left:964.5999999999999px;letter-spacing:0.100px;">制作子剪辑...</div><div style="top:755.73px;font-size:9.35px;line-height:13px;color:#141414;white-space:nowrap;left:964.5999999999999px;letter-spacing:0.100px;">在项目中显示</div><div style="top:772.94px;font-size:9.35px;line-height:13px;color:#141414;white-space:nowrap;left:964.5999999999999px;letter-spacing:0.100px;">在资源管理器中显示...</div><div style="top:790.14px;font-size:9.35px;line-height:13px;color:#141414;white-space:nowrap;left:964.5999999999999px;letter-spacing:0.100px;">属性</div><div style="top:807.35px;font-size:9.35px;line-height:13px;color:#8f8f8f;white-space:nowrap;left:964.5999999999999px;letter-spacing:0.168px;">查找 <span style="font-size:10.150px;">Adobe Stock</span> 音频</div><div style="left:963.8px;top:824.1400000000002px;width:176.2px;height:1px;background:#dadada;"></div><div style="top:830.33px;font-size:9.35px;line-height:13px;color:#141414;white-space:nowrap;left:964.5999999999999px;letter-spacing:0.100px;">显示剪辑关键帧</div>
<svg width="1512" height="847" viewBox="0 0 1512 847"><path d="M1129.3 236.53249999999994l2.800 2.800-2.800 2.800" stroke="#9a9a9a" stroke-width="1" fill="none"/><path d="M944.8 296.7274999999999l2.500 2.600 4.500-5" stroke="#2a4a78" stroke-width="1.200" fill="none"/><path d="M1129.3 431.56749999999977l2.800 2.800-2.800 2.800" stroke="#9a9a9a" stroke-width="1" fill="none"/><path d="M1129.3 454.5524999999997l2.800 2.800-2.800 2.800" stroke="#3a3a3a" stroke-width="1" fill="none"/><path d="M1129.3 609.5324999999998l2.800 2.800-2.800 2.800" stroke="#3a3a3a" stroke-width="1" fill="none"/><path d="M1129.3 833.3325000000002l2.800 2.800-2.800 2.800" stroke="#3a3a3a" stroke-width="1" fill="none"/></svg>
<div style="top:726.70px;font-size:16.5px;line-height:23px;color:#ee3326;white-space:nowrap;left:847.5px;letter-spacing:-0.083px;">选中第二个素材右键取消链接</div><div style="top:799.50px;font-size:17.6px;line-height:25px;color:rgba(255,255,255,0.500);white-space:nowrap;left:1327.5px;text-shadow:0.5px 0.8px 1px rgba(0,0,0,0.5);letter-spacing:-0.016px;">@稀土掘金技术社区</div>
<svg width="1512" height="847" viewBox="0 0 1512 847"><path d="M963.500 318.300 L967.100 329.400 L965.400 330.800 L894.900 697.300 L894.100 697.100 L957.300 329.400 L954.700 327.600 Z" fill="#f02a1e"/></svg>
</div></body></html>
